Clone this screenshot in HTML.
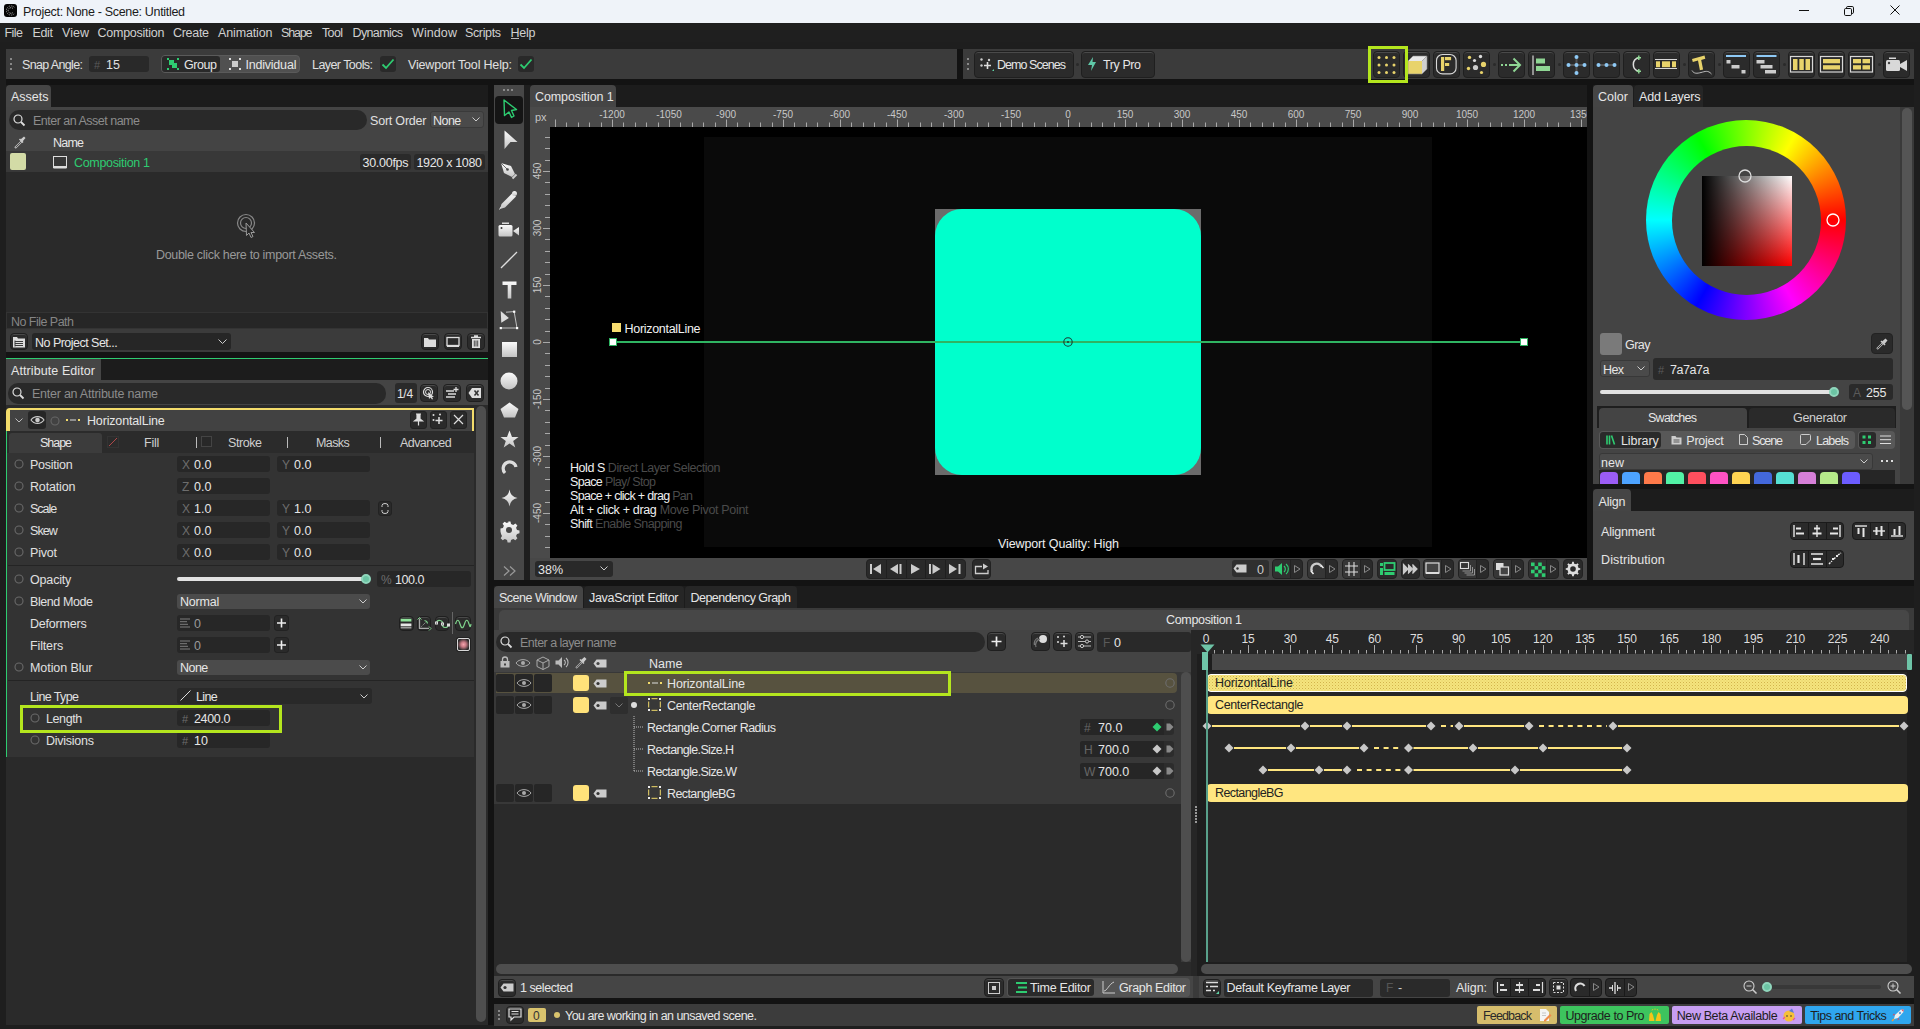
<!DOCTYPE html><html><head><meta charset='utf-8'><style>
*{box-sizing:border-box;margin:0;padding:0}
html,body{width:1920px;height:1029px;overflow:hidden;background:#1e1e1e;font-family:"Liberation Sans",sans-serif;font-size:12px;color:#dcdcdc}
div{position:absolute}
.t{white-space:nowrap}
svg{position:absolute;overflow:visible}
.btn{background:#2b2b2b;border:1px solid #1f1f1f;border-radius:4px;box-shadow:inset 0 1px 0 #4a4a4a}
.inp{background:#292929;border-radius:3px}
</style></head><body><div style="left:0px;top:0px;width:1920px;height:23px;background:#eff3f9"></div>
<div style="left:3.5px;top:4.3px;width:13px;height:13.2px;background:#050505;border-radius:3px"></div>
<svg style="left:3.5px;top:4.3px;" width="13" height="13" viewBox="0 0 13 13"><path d="M10.3 3.3A4.6 4.6 0 1 0 10.3 9.7" fill="none" stroke="#9a9a9a" stroke-width="0.9" stroke-dasharray="1.3 0.9"/><path d="M9 4.6A2.8 2.8 0 1 0 9 8.4" fill="none" stroke="#bbb" stroke-width="0.9" stroke-dasharray="1.2 0.8"/></svg>
<div class="t" style="left:23px;top:4.0px;height:16px;line-height:16px;color:#1b1b1b;font-size:12.5px;letter-spacing:-0.320px">Project: None - Scene: Untitled</div>
<div style="left:1799px;top:10px;width:10px;height:1px;background:#111"></div>
<svg style="left:1843px;top:4.5px;" width="12" height="12" viewBox="0 0 12 12"><rect x="1.5" y="3.5" width="7" height="7" rx="1.2" fill="none" stroke="#111"/><path d="M3.5 3.3V2.8a1.3 1.3 0 0 1 1.3-1.3h4.4a1.3 1.3 0 0 1 1.3 1.3v4.4a1.3 1.3 0 0 1-1.3 1.3h-0.5" fill="none" stroke="#111"/></svg>
<svg style="left:1890px;top:5px;" width="10" height="10" viewBox="0 0 10 10"><path d="M0.5 0.5L9.5 9.5M9.5 0.5L0.5 9.5" stroke="#111" stroke-width="1"/></svg>
<div style="left:0px;top:23px;width:1920px;height:19px;background:#1f1f1f"></div>
<div class="t" style="left:4.5px;top:24.5px;height:16px;line-height:16px;color:#d0d0d0;font-size:12.5px;letter-spacing:-0.550px">File</div>
<div class="t" style="left:32.5px;top:24.5px;height:16px;line-height:16px;color:#d0d0d0;font-size:12.5px;letter-spacing:-0.350px">Edit</div>
<div class="t" style="left:62px;top:24.5px;height:16px;line-height:16px;color:#d0d0d0;font-size:12.5px;letter-spacing:0.017px">View</div>
<div class="t" style="left:97.5px;top:24.5px;height:16px;line-height:16px;color:#d0d0d0;font-size:12.5px;letter-spacing:-0.250px">Composition</div>
<div class="t" style="left:173px;top:24.5px;height:16px;line-height:16px;color:#d0d0d0;font-size:12.5px;letter-spacing:-0.300px">Create</div>
<div class="t" style="left:218px;top:24.5px;height:16px;line-height:16px;color:#d0d0d0;font-size:12.5px;letter-spacing:-0.138px">Animation</div>
<div class="t" style="left:281px;top:24.5px;height:16px;line-height:16px;color:#d0d0d0;font-size:12.5px;letter-spacing:-1.162px">Shape</div>
<div class="t" style="left:322px;top:24.5px;height:16px;line-height:16px;color:#d0d0d0;font-size:12.5px;letter-spacing:-0.650px">Tool</div>
<div class="t" style="left:352.5px;top:24.5px;height:16px;line-height:16px;color:#d0d0d0;font-size:12.5px;letter-spacing:-0.621px">Dynamics</div>
<div class="t" style="left:412px;top:24.5px;height:16px;line-height:16px;color:#d0d0d0;font-size:12.5px;letter-spacing:0.090px">Window</div>
<div class="t" style="left:465px;top:24.5px;height:16px;line-height:16px;color:#d0d0d0;font-size:12.5px;letter-spacing:-0.367px">Scripts</div>
<div class="t" style="left:510.5px;top:24.5px;height:16px;line-height:16px;color:#d0d0d0;font-size:12.5px;letter-spacing:-0.233px">Help</div>
<div style="left:510.5px;top:38px;width:8.5px;height:1px;background:#bbb"></div>
<div style="left:6px;top:49px;width:951px;height:30px;background:#3b3b3b"></div>
<div style="left:957px;top:49px;width:6px;height:30px;background:#131313"></div>
<div style="left:963px;top:49px;width:951px;height:30px;background:#3b3b3b"></div>
<div style="left:6px;top:79px;width:1908px;height:6px;background:#131313"></div>
<div style="left:488px;top:85px;width:6px;height:940px;background:#131313"></div>
<div style="left:1587px;top:85px;width:6px;height:495px;background:#131313"></div>
<div style="left:494px;top:580px;width:1420px;height:6px;background:#131313"></div>
<div style="left:494px;top:998px;width:1420px;height:6px;background:#131313"></div>
<div style="left:10px;top:58px;width:2px;height:2px;background:#888"></div>
<div style="left:967px;top:58px;width:2px;height:2px;background:#888"></div>
<div style="left:10px;top:63px;width:2px;height:2px;background:#888"></div>
<div style="left:967px;top:63px;width:2px;height:2px;background:#888"></div>
<div style="left:10px;top:68px;width:2px;height:2px;background:#888"></div>
<div style="left:967px;top:68px;width:2px;height:2px;background:#888"></div>
<div class="t" style="left:22px;top:57.0px;height:16px;line-height:16px;color:#e0e0e0;font-size:12.5px;letter-spacing:-0.640px">Snap Angle:</div>
<div style="left:89px;top:56px;width:60px;height:16px;background:#292929;border-radius:3px"></div>
<div class="t" style="left:94px;top:57.0px;height:16px;line-height:16px;color:#5a5a5a;font-size:11px">#</div>
<div class="t" style="left:106px;top:57.0px;height:16px;line-height:16px;color:#e0e0e0;font-size:12.5px">15</div>
<div style="left:161px;top:55px;width:139px;height:18px;background:#505050;border-radius:4px;border:1px solid #5a5a5a"></div>
<div style="left:162px;top:56px;width:58px;height:16px;background:#292929;border-radius:3px"></div>
<svg style="left:167px;top:58px;" width="13" height="12" viewBox="0 0 13 12"><rect x="0" y="0" width="2" height="2" fill="#2ecc71"/><rect x="10" y="0" width="2" height="2" fill="#2ecc71"/><rect x="0" y="10" width="2" height="2" fill="#2ecc71"/><rect x="10" y="10" width="2" height="2" fill="#2ecc71"/><rect x="2" y="2" width="5" height="5" fill="#2ecc71"/><rect x="5" y="5" width="5" height="5" fill="#2ecc71"/></svg>
<div class="t" style="left:184px;top:57.0px;height:16px;line-height:16px;color:#e6e6e6;font-size:12.5px;letter-spacing:-0.438px">Group</div>
<svg style="left:229px;top:58px;" width="12" height="12" viewBox="0 0 12 12"><rect x="0" y="0" width="2" height="2" fill="#ddd"/><rect x="10" y="0" width="2" height="2" fill="#ddd"/><rect x="0" y="10" width="2" height="2" fill="#ddd"/><rect x="10" y="10" width="2" height="2" fill="#ddd"/><rect x="3" y="3" width="6" height="6" fill="#ccc"/></svg>
<div class="t" style="left:245.4px;top:57.0px;height:16px;line-height:16px;color:#e6e6e6;font-size:12.5px;letter-spacing:-0.200px">Individual</div>
<div class="t" style="left:312px;top:57.0px;height:16px;line-height:16px;color:#e0e0e0;font-size:12.5px;letter-spacing:-0.559px">Layer Tools:</div>
<div style="left:380px;top:56px;width:16px;height:16px;background:#292929;border-radius:3px"></div>
<svg style="left:380px;top:56px;" width="16" height="16" viewBox="0 0 16 16"><path d="M2.5 8.5L6 12L13.5 3.5" fill="none" stroke="#2ecc71" stroke-width="1.8"/></svg>
<div class="t" style="left:408px;top:57.0px;height:16px;line-height:16px;color:#e0e0e0;font-size:12.5px;letter-spacing:-0.181px">Viewport Tool Help:</div>
<div style="left:518px;top:56px;width:16px;height:16px;background:#292929;border-radius:3px"></div>
<svg style="left:518px;top:56px;" width="16" height="16" viewBox="0 0 16 16"><path d="M2.5 8.5L6 12L13.5 3.5" fill="none" stroke="#2ecc71" stroke-width="1.8"/></svg>
<div class="btn" style="left:974px;top:51px;width:100px;height:27px;"></div>
<svg style="left:980px;top:58px;" width="14" height="14" viewBox="0 0 14 14"><circle cx="1.5" cy="1.5" r="1.2" fill="#ccc"/><circle cx="9" cy="2" r="1.2" fill="#ccc"/><circle cx="1.5" cy="7.5" r="1.2" fill="#ccc"/><path d="M7.5 4v7M4 7.5h7" stroke="#ddd" stroke-width="1.6"/><path d="M12 13L14 11V13Z" fill="#5fd3a5"/></svg>
<div class="t" style="left:997px;top:57.0px;height:16px;line-height:16px;color:#e6e6e6;font-size:12.5px;letter-spacing:-0.950px">Demo Scenes</div>
<div style="left:1076px;top:63px;width:3px;height:3px;background:#2a2a2a;border-radius:50%"></div>
<div class="btn" style="left:1081px;top:51px;width:74px;height:27px;"></div>
<svg style="left:1088px;top:57px;" width="9" height="14" viewBox="0 0 9 14"><path d="M5 0L0 8H4L3 14L8 5H4.5Z" fill="#5fc9a8"/></svg>
<div class="t" style="left:1103px;top:57.0px;height:16px;line-height:16px;color:#e6e6e6;font-size:12.5px;letter-spacing:-0.417px">Try Pro</div>
<div class="btn" style="left:1373px;top:51px;width:27px;height:27px;"></div>
<div class="btn" style="left:1403px;top:51px;width:27px;height:27px;"></div>
<div class="btn" style="left:1433px;top:51px;width:27px;height:27px;"></div>
<div class="btn" style="left:1463px;top:51px;width:27px;height:27px;"></div>
<div class="btn" style="left:1498px;top:51px;width:27px;height:27px;"></div>
<div class="btn" style="left:1528px;top:51px;width:27px;height:27px;"></div>
<div class="btn" style="left:1563px;top:51px;width:27px;height:27px;"></div>
<div class="btn" style="left:1593px;top:51px;width:27px;height:27px;"></div>
<div class="btn" style="left:1623px;top:51px;width:27px;height:27px;"></div>
<div class="btn" style="left:1653px;top:51px;width:27px;height:27px;"></div>
<div class="btn" style="left:1688px;top:51px;width:27px;height:27px;"></div>
<div class="btn" style="left:1723px;top:51px;width:27px;height:27px;"></div>
<div class="btn" style="left:1753px;top:51px;width:27px;height:27px;"></div>
<div class="btn" style="left:1788px;top:51px;width:27px;height:27px;"></div>
<div class="btn" style="left:1818px;top:51px;width:27px;height:27px;"></div>
<div class="btn" style="left:1848px;top:51px;width:27px;height:27px;"></div>
<div class="btn" style="left:1883px;top:51px;width:27px;height:27px;"></div>
<div style="left:1493px;top:63px;width:3px;height:3px;background:#2a2a2a;border-radius:50%"></div>
<div style="left:1558px;top:63px;width:3px;height:3px;background:#2a2a2a;border-radius:50%"></div>
<div style="left:1683px;top:63px;width:3px;height:3px;background:#2a2a2a;border-radius:50%"></div>
<div style="left:1718px;top:63px;width:3px;height:3px;background:#2a2a2a;border-radius:50%"></div>
<div style="left:1783px;top:63px;width:3px;height:3px;background:#2a2a2a;border-radius:50%"></div>
<div style="left:1878px;top:63px;width:3px;height:3px;background:#2a2a2a;border-radius:50%"></div>
<svg style="left:1373px;top:51px;" width="27" height="27" viewBox="0 0 27 27"><circle cx="6" cy="6.5" r="1.5" fill="#e8d36b"/><circle cx="6" cy="14" r="1.5" fill="#e8d36b"/><circle cx="6" cy="21.5" r="1.5" fill="#e8d36b"/><circle cx="13.5" cy="6.5" r="1.5" fill="#e8d36b"/><circle cx="13.5" cy="14" r="1.5" fill="#e8d36b"/><circle cx="13.5" cy="21.5" r="1.5" fill="#e8d36b"/><circle cx="21" cy="6.5" r="1.5" fill="#e8d36b"/><circle cx="21" cy="14" r="1.5" fill="#e8d36b"/><circle cx="21" cy="21.5" r="1.5" fill="#e8d36b"/></svg>
<svg style="left:1403px;top:51px;" width="27" height="27" viewBox="0 0 27 27"><path d="M5 10L10 5H24L19 10Z" fill="#e8e8e8"/><path d="M19 10L24 5V18L19 23Z" fill="#cfcfcf"/><rect x="5" y="10" width="14" height="13" fill="#e8d36b"/><path d="M5 10L10 5H24V18L19 23H5Z" fill="none" stroke="#888" stroke-width="0.6"/></svg>
<svg style="left:1433px;top:51px;" width="27" height="27" viewBox="0 0 27 27"><rect x="3.5" y="3.5" width="19.6" height="19.4" rx="6" fill="none" stroke="#d8d8d8" stroke-width="1.1"/><rect x="8" y="6" width="3.2" height="14" fill="#e8d36b"/><rect x="12" y="6" width="6.1" height="3.2" fill="#e8d36b"/><rect x="12" y="12" width="4.2" height="3" fill="#e8d36b"/></svg>
<svg style="left:1463px;top:51px;" width="27" height="27" viewBox="0 0 27 27"><circle cx="6.5" cy="6.4" r="1.7" fill="#e8d36b"/><circle cx="17.5" cy="5.5" r="1.7" fill="#ddd"/><circle cx="11.5" cy="9.5" r="1.6" fill="#ddd"/><circle cx="20.5" cy="13.4" r="2.6" fill="#e8d36b"/><circle cx="12.5" cy="16.5" r="2.6" fill="#ccc"/><circle cx="5.5" cy="17.5" r="1.7" fill="#e8d36b"/><circle cx="18.5" cy="21.5" r="1.6" fill="#e8d36b"/></svg>
<svg style="left:1498px;top:51px;" width="27" height="27" viewBox="0 0 27 27"><path d="M3 14h2M7 14h2M11 14h11" stroke="#8fd694" stroke-width="2"/><path d="M15.5 7.5L22 14L15.5 20.5" fill="none" stroke="#8fd694" stroke-width="2"/></svg>
<svg style="left:1528px;top:51px;" width="27" height="27" viewBox="0 0 27 27"><path d="M5 4.5V24" stroke="#d8d8d8" stroke-width="1.2"/><rect x="8" y="7.5" width="9" height="5" fill="#8fd694"/><rect x="8" y="15" width="14" height="5" fill="#8fd694"/></svg>
<svg style="left:1563px;top:51px;" width="27" height="27" viewBox="0 0 27 27"><path d="M13.5 5V23M5 14H22" stroke="#555" stroke-width="2"/><circle cx="13.5" cy="6" r="2" fill="#8ec9f5"/><circle cx="5.5" cy="14" r="2" fill="#8ec9f5"/><circle cx="13.5" cy="14" r="2" fill="#8ec9f5"/><circle cx="21.5" cy="14" r="2" fill="#8ec9f5"/><circle cx="13.5" cy="22" r="2" fill="#8ec9f5"/></svg>
<svg style="left:1593px;top:51px;" width="27" height="27" viewBox="0 0 27 27"><path d="M5 14H22" stroke="#555" stroke-width="2"/><circle cx="5.5" cy="14" r="2" fill="#8ec9f5"/><circle cx="13.5" cy="14" r="2" fill="#8ec9f5"/><circle cx="21.5" cy="14" r="2" fill="#8ec9f5"/></svg>
<svg style="left:1623px;top:51px;" width="27" height="27" viewBox="0 0 27 27"><path d="M15.8 6.7A6.9 6.9 0 0 0 15.8 20.2" fill="none" stroke="#ddd" stroke-width="1.5"/><path d="M15.8 4.5V9M13.6 6.7H18" stroke="#8fd694" stroke-width="1.5"/><path d="M15.8 18V22.4M13.6 20.2H18" stroke="#8fd694" stroke-width="1.5"/></svg>
<svg style="left:1653px;top:51px;" width="27" height="27" viewBox="0 0 27 27"><path d="M2 8.5H24M2 17.5H24" stroke="#d8d8d8" stroke-width="1.1"/><rect x="3" y="10.3" width="4" height="5.9" fill="#e8d36b"/><rect x="9" y="10.3" width="8" height="5.9" fill="#e8d36b"/><rect x="19" y="10.3" width="4" height="5.9" fill="#e8d36b"/></svg>
<svg style="left:1688px;top:51px;" width="27" height="27" viewBox="0 0 27 27"><path d="M4 8L16.5 4.5L17.3 7.8L13.2 8.9L15.1 18.5L11.9 19.2L10 9.6L4.8 11Z" fill="#e8d36b"/><path d="M4 19.5C6 23 9 22.5 13 21.5S20 19 23.5 23" fill="none" stroke="#ccc" stroke-width="0.9"/></svg>
<svg style="left:1723px;top:51px;" width="27" height="27" viewBox="0 0 27 27"><path d="M3 5H23" stroke="#8ec9f5" stroke-width="2"/><rect x="3.5" y="9" width="4" height="3.5" fill="#ccc"/><rect x="8.5" y="14" width="8" height="3.5" fill="#ccc"/><rect x="18.5" y="19" width="4" height="3.5" fill="#ccc"/></svg>
<svg style="left:1753px;top:51px;" width="27" height="27" viewBox="0 0 27 27"><path d="M3.5 5H23.5" stroke="#8ec9f5" stroke-width="2"/><rect x="3.5" y="9" width="8" height="3.5" fill="#ccc"/><rect x="7.5" y="14" width="12" height="3.5" fill="#ccc"/><rect x="12" y="19" width="11" height="3.5" fill="#ccc"/></svg>
<svg style="left:1788px;top:51px;" width="27" height="27" viewBox="0 0 27 27"><rect x="2.5" y="5.5" width="22" height="15.5" fill="none" stroke="#d8d8d8" stroke-width="1.2"/><rect x="5" y="8" width="4.5" height="11" fill="#e8d36b"/><rect x="11.3" y="8" width="4.5" height="11" fill="#e8d36b"/><rect x="17.5" y="8" width="4.5" height="11" fill="#e8d36b"/></svg>
<svg style="left:1818px;top:51px;" width="27" height="27" viewBox="0 0 27 27"><rect x="2.5" y="5.5" width="22" height="15.5" fill="none" stroke="#d8d8d8" stroke-width="1.2"/><rect x="5" y="8" width="17" height="4.3" fill="#e8d36b"/><rect x="5" y="14.2" width="17" height="4.3" fill="#e8d36b"/></svg>
<svg style="left:1848px;top:51px;" width="27" height="27" viewBox="0 0 27 27"><rect x="2.5" y="5.5" width="22" height="15.5" fill="none" stroke="#d8d8d8" stroke-width="1.2"/><rect x="5" y="8" width="8" height="4.3" fill="#e8d36b"/><rect x="14.5" y="8" width="7.5" height="4.3" fill="#e8d36b"/><rect x="5" y="14.2" width="8" height="4.3" fill="#e8d36b"/><rect x="14.5" y="14.2" width="7.5" height="4.3" fill="#e8d36b"/></svg>
<svg style="left:1883px;top:51px;" width="27" height="27" viewBox="0 0 27 27"><rect x="3" y="9" width="14" height="11" rx="1.5" fill="#d8d8d8"/><rect x="6" y="6.5" width="7" height="1.5" fill="#d8d8d8"/><circle cx="6" cy="12" r="1.2" fill="#444"/><path d="M17 13L24 9V20L17 16Z" fill="#d8d8d8"/></svg>
<div style="left:1368px;top:46px;width:40px;height:37px;border:3px solid #b4e61e"></div>
<div style="left:6px;top:85px;width:482px;height:22px;background:#1c1c1c"></div>
<div style="left:6px;top:85px;width:45px;height:22px;background:#454545;border-radius:4px 4px 0 0"></div>
<div class="t" style="left:11px;top:89.0px;height:16px;line-height:16px;color:#e6e6e6;font-size:12.5px">Assets</div>
<div style="left:6px;top:107px;width:482px;height:44px;background:#444444"></div>
<div style="left:9px;top:110px;width:358px;height:20px;background:#292929;border-radius:10px"></div>
<svg style="left:13px;top:114px;" width="13" height="13" viewBox="0 0 13 13"><circle cx="5" cy="5" r="4" fill="none" stroke="#ddd" stroke-width="1.2"/><path d="M8 8L11.5 11.5" stroke="#ddd" stroke-width="1.8"/></svg>
<div class="t" style="left:33px;top:113.0px;height:16px;line-height:16px;color:#8c8c8c;font-size:12.5px;letter-spacing:-0.503px">Enter an Asset name</div>
<div class="t" style="left:370px;top:113.0px;height:16px;line-height:16px;color:#e0e0e0;font-size:12.5px;letter-spacing:-0.206px">Sort Order</div>
<div style="left:430px;top:111px;width:54px;height:17px;background:#4a4a4a;border:1px solid #3a3a3a;border-radius:3px"></div>
<div class="t" style="left:433px;top:113.0px;height:16px;line-height:16px;color:#e6e6e6;font-size:12.5px;letter-spacing:-0.533px">None</div>
<svg style="left:472px;top:117px;" width="8" height="5" viewBox="0 0 8 5"><path d="M0.5 0.5L4 4L7.5 0.5" fill="none" stroke="#ccc"/></svg>
<svg style="left:13px;top:135px;" width="13" height="14" viewBox="0 0 13 14"><path d="M2 13L9 6" stroke="#bbb" stroke-width="2.2"/><path d="M2.8 12.2L8.5 6.5" stroke="#444" stroke-width="0.9"/><path d="M7.5 4.5L11 1.5L12.5 3L9.5 6.5Z" fill="#ccc"/><path d="M6.5 4L10 7.5" stroke="#ccc" stroke-width="1.6"/></svg>
<div class="t" style="left:53px;top:135.0px;height:16px;line-height:16px;color:#e6e6e6;font-size:12.5px;letter-spacing:-0.783px">Name</div>
<div style="left:6px;top:151px;width:482px;height:21px;background:#383838"></div>
<div style="left:10px;top:153px;width:16px;height:17px;background:#d3dba6;border-radius:2px"></div>
<svg style="left:53px;top:156px;" width="14" height="13" viewBox="0 0 14 13"><rect x="0.5" y="0.5" width="13" height="11" fill="none" stroke="#ddd"/><rect x="0.5" y="10" width="13" height="2.5" fill="#ddd"/></svg>
<div class="t" style="left:74px;top:155.0px;height:16px;line-height:16px;color:#2ecc71;font-size:12.5px;letter-spacing:-0.325px">Composition 1</div>
<div style="left:360px;top:154px;width:51px;height:16px;background:#2a2a2a;border-radius:3px"></div>
<div class="t" style="left:362.5px;top:155.0px;height:16px;line-height:16px;color:#e6e6e6;font-size:12.5px;letter-spacing:-0.279px">30.00fps</div>
<div style="left:414px;top:154px;width:71px;height:16px;background:#2a2a2a;border-radius:3px"></div>
<div class="t" style="left:416.5px;top:155.0px;height:16px;line-height:16px;color:#e6e6e6;font-size:12.5px;letter-spacing:-0.330px">1920 x 1080</div>
<div style="left:6px;top:172px;width:482px;height:140px;background:#2a2a2a"></div>
<svg style="left:236px;top:211px;" width="22" height="28" viewBox="0 0 22 28"><circle cx="10" cy="12" r="8.5" fill="none" stroke="#888" stroke-width="1.2"/><circle cx="10" cy="12" r="5.5" fill="none" stroke="#888" stroke-width="1.2"/><path d="M10 12L10.5 24.5L13 22L15 26.5L17 25.5L15 21.5L18.5 21.5Z" fill="#2a2a2a" stroke="#999" stroke-width="1"/></svg>
<div class="t" style="left:156px;top:247.0px;height:16px;line-height:16px;color:#999;font-size:12.5px;letter-spacing:-0.316px">Double click here to import Assets.</div>
<div style="left:6px;top:312px;width:482px;height:17px;background:#262626;border:1px solid #333"></div>
<div class="t" style="left:11px;top:314.0px;height:16px;line-height:16px;color:#858585;font-size:12.5px;letter-spacing:-0.527px">No File Path</div>
<div style="left:6px;top:329px;width:482px;height:23px;background:#3b3b3b"></div>
<div class="btn" style="left:10px;top:333px;width:18px;height:17px;"></div>
<svg style="left:12px;top:335px;" width="14" height="13" viewBox="0 0 14 13"><path d="M1 2h4l1 1.5h7v9H1Z" fill="#ddd"/><path d="M3 6.5h8M3 8.5h8M3 10.5h8" stroke="#3b3b3b" stroke-width="1"/><path d="M3 5.5V11.5" stroke="#3b3b3b"/></svg>
<div style="left:32px;top:333px;width:199px;height:17px;background:#262626;border-radius:3px"></div>
<div class="t" style="left:35px;top:334.5px;height:16px;line-height:16px;color:#e6e6e6;font-size:12.5px;letter-spacing:-0.519px">No Project Set...</div>
<svg style="left:218px;top:339px;" width="9" height="5" viewBox="0 0 9 5"><path d="M0.5 0.5L4.5 4.5L8.5 0.5" fill="none" stroke="#ccc"/></svg>
<div class="btn" style="left:421px;top:333px;width:18px;height:17px;"></div>
<div class="btn" style="left:444px;top:333px;width:18px;height:17px;"></div>
<div class="btn" style="left:467px;top:333px;width:18px;height:17px;"></div>
<svg style="left:423px;top:336px;" width="14" height="12" viewBox="0 0 14 12"><path d="M1 2h4l1 1.5h7v7.5H1Z" fill="#ddd"/></svg>
<svg style="left:446px;top:336px;" width="14" height="12" viewBox="0 0 14 12"><rect x="1" y="1.5" width="12" height="8" fill="none" stroke="#ddd" stroke-width="1.3"/><rect x="1" y="9" width="12" height="2" fill="#ddd"/></svg>
<svg style="left:469px;top:335px;" width="14" height="14" viewBox="0 0 14 14"><path d="M2 2.5h10M5 1h4" stroke="#ddd" stroke-width="1.3"/><path d="M3 4h8v9H3Z" fill="#ddd"/><path d="M5.3 5.5v6M7 5.5v6M8.7 5.5v6" stroke="#3b3b3b" stroke-width="0.9"/></svg>
<div style="left:6px;top:352px;width:482px;height:6px;background:#141414"></div>
<div style="left:6px;top:358px;width:482px;height:1px;background:#2ecc71"></div>
<div style="left:6px;top:359px;width:482px;height:21px;background:#1c1c1c"></div>
<div style="left:6px;top:359px;width:95px;height:21px;background:#454545"></div>
<div class="t" style="left:11px;top:362.5px;height:16px;line-height:16px;color:#e6e6e6;font-size:12.5px;letter-spacing:0.087px">Attribute Editor</div>
<div style="left:6px;top:380px;width:482px;height:25px;background:#444444"></div>
<div style="left:8px;top:383px;width:378px;height:21px;background:#292929;border-radius:10px"></div>
<svg style="left:12px;top:387px;" width="13" height="13" viewBox="0 0 13 13"><circle cx="5" cy="5" r="4" fill="none" stroke="#ddd" stroke-width="1.2"/><path d="M8 8L11.5 11.5" stroke="#ddd" stroke-width="1.8"/></svg>
<div class="t" style="left:32px;top:386.0px;height:16px;line-height:16px;color:#8c8c8c;font-size:12.5px;letter-spacing:-0.241px">Enter an Attribute name</div>
<div style="left:395px;top:383px;width:22px;height:20px;background:#2a2a2a;border-radius:3px"></div>
<div class="t" style="left:397px;top:386.0px;height:16px;line-height:16px;color:#e6e6e6;font-size:12px;letter-spacing:-0.3px">1/4</div>
<div class="btn" style="left:420px;top:384px;width:18px;height:18px;"></div>
<div class="btn" style="left:443px;top:384px;width:18px;height:18px;"></div>
<div class="btn" style="left:466px;top:384px;width:18px;height:18px;"></div>
<svg style="left:422px;top:386px;" width="14" height="14" viewBox="0 0 14 14"><circle cx="6" cy="6" r="4.5" fill="none" stroke="#ddd" stroke-width="1.2"/><circle cx="6" cy="6" r="2.5" fill="none" stroke="#ddd"/><path d="M6 6L7 13L8.5 11.5L10 13.5L11 13L10 11L12 11Z" fill="#ddd"/></svg>
<svg style="left:445px;top:386px;" width="14" height="14" viewBox="0 0 14 14"><path d="M1 5h8M3 8h8M1 11h9" stroke="#ddd" stroke-width="1.5"/><path d="M11 1v5M8.5 3.5h5" stroke="#ddd" stroke-width="1.3"/></svg>
<svg style="left:468px;top:387px;" width="14" height="12" viewBox="0 0 14 12"><path d="M4 1H13V11H4L0.5 6Z" fill="#ddd"/><path d="M6.5 3.5L10.5 8.5M10.5 3.5L6.5 8.5" stroke="#333" stroke-width="1.5"/></svg>
<div style="left:6px;top:405px;width:482px;height:620px;background:#2a2a2a"></div>
<div style="left:476px;top:406px;width:10px;height:616px;background:#4e4e4e;border-radius:5px"></div>
<div style="left:6px;top:408px;width:468px;height:23px;background:#424242;border-top:2px solid #f3dc6b;border-right:2px solid #f3dc6b;border-left:4px solid #f3dc6b;border-radius:4px 0 0 0"></div>
<svg style="left:15px;top:418px;" width="8" height="5" viewBox="0 0 8 5"><path d="M0.5 0.5L4 4L7.5 0.5" fill="none" stroke="#bbb"/></svg>
<div style="left:28px;top:411px;width:18px;height:18px;background:#262626;border-radius:3px"></div>
<svg style="left:30px;top:415px;" width="15" height="10" viewBox="0 0 15 10"><path d="M1 5C4 0.5 11 0.5 14 5C11 9.5 4 9.5 1 5Z" fill="none" stroke="#ccc" stroke-width="1.1"/><circle cx="7.5" cy="5" r="2.3" fill="#ccc"/></svg>
<svg style="left:50px;top:416px;" width="10" height="10" viewBox="0 0 10 10"><circle cx="5" cy="5" r="4" fill="none" stroke="#666" stroke-width="1.1"/></svg>
<svg style="left:66px;top:418px;" width="15" height="4" viewBox="0 0 15 4"><rect x="0" y="1" width="2" height="2" fill="#f3dc6b"/><rect x="4" y="1.5" width="6" height="1" fill="#ddd"/><rect x="12" y="1" width="2" height="2" fill="#f3dc6b"/></svg>
<div class="t" style="left:87px;top:413.0px;height:16px;line-height:16px;color:#e6e6e6;font-size:12.5px;letter-spacing:-0.162px">HorizontalLine</div>
<div style="left:410px;top:411px;width:17px;height:18px;background:#2a2a2a;border-radius:3px;border:1px solid #222"></div>
<div style="left:430px;top:411px;width:17px;height:18px;background:#2a2a2a;border-radius:3px;border:1px solid #222"></div>
<div style="left:450px;top:411px;width:17px;height:18px;background:#2a2a2a;border-radius:3px;border:1px solid #222"></div>
<svg style="left:413px;top:413px;" width="11" height="13" viewBox="0 0 11 13"><path d="M3 1h5M4 1v5L1.5 8h8L7 6V1M5.5 8v4.5" fill="#ddd" stroke="#ddd" stroke-width="1.2"/></svg>
<svg style="left:432px;top:413px;" width="13" height="13" viewBox="0 0 13 13"><circle cx="1.5" cy="2" r="1" fill="#ddd"/><circle cx="8" cy="1.5" r="1" fill="#ddd"/><circle cx="1.5" cy="7" r="1" fill="#ddd"/><path d="M7 4v7M3.5 7.5h7" stroke="#ddd" stroke-width="1.5"/></svg>
<svg style="left:453px;top:414px;" width="11" height="11" viewBox="0 0 11 11"><path d="M1 1L10 10M10 1L1 10" stroke="#ddd" stroke-width="1.2"/></svg>
<div style="left:6px;top:431px;width:468px;height:22px;background:#2b2b2b"></div>
<div style="left:9px;top:433px;width:93px;height:20px;background:#3c3c3c;border-radius:3px 3px 0 0"></div>
<div class="t" style="left:40px;top:435.0px;height:16px;line-height:16px;color:#e6e6e6;font-size:12.5px;letter-spacing:-1.037px">Shape</div>
<svg style="left:107px;top:436px;" width="12" height="12" viewBox="0 0 12 12"><rect x="0.5" y="0.5" width="11" height="11" fill="none" stroke="#333"/><path d="M2 10L10 2" stroke="#b04848" stroke-width="1"/></svg>
<div class="t" style="left:144px;top:435.0px;height:16px;line-height:16px;color:#cfcfcf;font-size:12.5px;letter-spacing:-0.217px">Fill</div>
<div style="left:196px;top:437px;width:1px;height:11px;background:#bbb"></div>
<div style="left:201px;top:436px;width:11px;height:11px;border:1px solid #444;background:#282828"></div>
<div class="t" style="left:228px;top:435.0px;height:16px;line-height:16px;color:#cfcfcf;font-size:12.5px;letter-spacing:-0.430px">Stroke</div>
<div style="left:287px;top:437px;width:1px;height:11px;background:#bbb"></div>
<div class="t" style="left:316px;top:435.0px;height:16px;line-height:16px;color:#cfcfcf;font-size:12.5px;letter-spacing:-0.600px">Masks</div>
<div style="left:380px;top:437px;width:1px;height:11px;background:#bbb"></div>
<div class="t" style="left:400px;top:435.0px;height:16px;line-height:16px;color:#cfcfcf;font-size:12.5px;letter-spacing:-0.571px">Advanced</div>
<div style="left:6px;top:453px;width:468px;height:304px;background:#333333"></div>
<div style="left:6px;top:431px;width:1px;height:326px;background:#2ecc71"></div>
<div style="left:8px;top:565px;width:466px;height:1px;background:#242424"></div>
<div style="left:8px;top:680px;width:466px;height:1px;background:#242424"></div>
<svg style="left:14px;top:459px;" width="10" height="10" viewBox="0 0 10 10"><circle cx="5" cy="5" r="4" fill="none" stroke="#6a6a6a" stroke-width="1.1"/></svg>
<div class="t" style="left:30px;top:457.0px;height:16px;line-height:16px;color:#e0e0e0;font-size:12.5px;letter-spacing:-0.264px">Position</div>
<div style="left:177px;top:456px;width:93px;height:16px;background:#272727;border-radius:3px"></div>
<div class="t" style="left:182px;top:457.0px;height:16px;line-height:16px;color:#6d6d6d;font-size:12px">X</div>
<div class="t" style="left:194px;top:457.0px;height:16px;line-height:16px;color:#e6e6e6;font-size:12.5px">0.0</div>
<div style="left:277px;top:456px;width:93px;height:16px;background:#272727;border-radius:3px"></div>
<div class="t" style="left:282px;top:457.0px;height:16px;line-height:16px;color:#6d6d6d;font-size:12px">Y</div>
<div class="t" style="left:294px;top:457.0px;height:16px;line-height:16px;color:#e6e6e6;font-size:12.5px">0.0</div>
<svg style="left:14px;top:481px;" width="10" height="10" viewBox="0 0 10 10"><circle cx="5" cy="5" r="4" fill="none" stroke="#6a6a6a" stroke-width="1.1"/></svg>
<div class="t" style="left:30px;top:479.0px;height:16px;line-height:16px;color:#e0e0e0;font-size:12.5px;letter-spacing:-0.164px">Rotation</div>
<div style="left:177px;top:478px;width:93px;height:16px;background:#272727;border-radius:3px"></div>
<div class="t" style="left:182px;top:479.0px;height:16px;line-height:16px;color:#6d6d6d;font-size:12px">Z</div>
<div class="t" style="left:194px;top:479.0px;height:16px;line-height:16px;color:#e6e6e6;font-size:12.5px">0.0</div>
<svg style="left:14px;top:503px;" width="10" height="10" viewBox="0 0 10 10"><circle cx="5" cy="5" r="4" fill="none" stroke="#6a6a6a" stroke-width="1.1"/></svg>
<div class="t" style="left:30px;top:501.0px;height:16px;line-height:16px;color:#e0e0e0;font-size:12.5px;letter-spacing:-0.987px">Scale</div>
<div style="left:177px;top:500px;width:93px;height:16px;background:#272727;border-radius:3px"></div>
<div class="t" style="left:182px;top:501.0px;height:16px;line-height:16px;color:#6d6d6d;font-size:12px">X</div>
<div class="t" style="left:194px;top:501.0px;height:16px;line-height:16px;color:#e6e6e6;font-size:12.5px">1.0</div>
<div style="left:277px;top:500px;width:93px;height:16px;background:#272727;border-radius:3px"></div>
<div class="t" style="left:282px;top:501.0px;height:16px;line-height:16px;color:#6d6d6d;font-size:12px">Y</div>
<div class="t" style="left:294px;top:501.0px;height:16px;line-height:16px;color:#e6e6e6;font-size:12.5px">1.0</div>
<svg style="left:14px;top:525px;" width="10" height="10" viewBox="0 0 10 10"><circle cx="5" cy="5" r="4" fill="none" stroke="#6a6a6a" stroke-width="1.1"/></svg>
<div class="t" style="left:30px;top:523.0px;height:16px;line-height:16px;color:#e0e0e0;font-size:12.5px;letter-spacing:-0.950px">Skew</div>
<div style="left:177px;top:522px;width:93px;height:16px;background:#272727;border-radius:3px"></div>
<div class="t" style="left:182px;top:523.0px;height:16px;line-height:16px;color:#6d6d6d;font-size:12px">X</div>
<div class="t" style="left:194px;top:523.0px;height:16px;line-height:16px;color:#e6e6e6;font-size:12.5px">0.0</div>
<div style="left:277px;top:522px;width:93px;height:16px;background:#272727;border-radius:3px"></div>
<div class="t" style="left:282px;top:523.0px;height:16px;line-height:16px;color:#6d6d6d;font-size:12px">Y</div>
<div class="t" style="left:294px;top:523.0px;height:16px;line-height:16px;color:#e6e6e6;font-size:12.5px">0.0</div>
<svg style="left:14px;top:547px;" width="10" height="10" viewBox="0 0 10 10"><circle cx="5" cy="5" r="4" fill="none" stroke="#6a6a6a" stroke-width="1.1"/></svg>
<div class="t" style="left:30px;top:545.0px;height:16px;line-height:16px;color:#e0e0e0;font-size:12.5px;letter-spacing:-0.200px">Pivot</div>
<div style="left:177px;top:544px;width:93px;height:16px;background:#272727;border-radius:3px"></div>
<div class="t" style="left:182px;top:545.0px;height:16px;line-height:16px;color:#6d6d6d;font-size:12px">X</div>
<div class="t" style="left:194px;top:545.0px;height:16px;line-height:16px;color:#e6e6e6;font-size:12.5px">0.0</div>
<div style="left:277px;top:544px;width:93px;height:16px;background:#272727;border-radius:3px"></div>
<div class="t" style="left:282px;top:545.0px;height:16px;line-height:16px;color:#6d6d6d;font-size:12px">Y</div>
<div class="t" style="left:294px;top:545.0px;height:16px;line-height:16px;color:#e6e6e6;font-size:12.5px">0.0</div>
<div style="left:378px;top:501px;width:14px;height:15px;background:#2a2a2a;border:1px solid #222;border-radius:3px"></div>
<svg style="left:381px;top:503px;" width="8" height="11" viewBox="0 0 8 11"><path d="M1 4V2.5a3 2 0 0 1 6 0V4M1 7v1.5a3 2 0 0 0 6 0V7" fill="none" stroke="#ccc" stroke-width="1"/></svg>
<svg style="left:14px;top:574px;" width="10" height="10" viewBox="0 0 10 10"><circle cx="5" cy="5" r="4" fill="none" stroke="#6a6a6a" stroke-width="1.1"/></svg>
<div class="t" style="left:30px;top:572.0px;height:16px;line-height:16px;color:#e0e0e0;font-size:12.5px;letter-spacing:-0.167px">Opacity</div>
<div style="left:177px;top:577px;width:190px;height:4px;background:#e2e2e2;border-radius:2px"></div>
<div style="left:361px;top:574px;width:10px;height:10px;background:#6cc4a4;border-radius:50%;border:2px solid #8fd6bc"></div>
<div style="left:377px;top:571px;width:94px;height:16px;background:#272727;border-radius:3px"></div>
<div class="t" style="left:381px;top:572.0px;height:16px;line-height:16px;color:#6d6d6d;font-size:12px">%</div>
<div class="t" style="left:395px;top:572.0px;height:16px;line-height:16px;color:#e6e6e6;font-size:12.5px;letter-spacing:-0.475px">100.0</div>
<svg style="left:14px;top:596px;" width="10" height="10" viewBox="0 0 10 10"><circle cx="5" cy="5" r="4" fill="none" stroke="#6a6a6a" stroke-width="1.1"/></svg>
<div class="t" style="left:30px;top:594.0px;height:16px;line-height:16px;color:#e0e0e0;font-size:12.5px;letter-spacing:-0.411px">Blend Mode</div>
<div style="left:177px;top:594px;width:193px;height:15px;background:#4b4b4b;border-radius:3px"></div>
<div class="t" style="left:180px;top:594.0px;height:16px;line-height:16px;color:#e6e6e6;font-size:12.5px;letter-spacing:-0.200px">Normal</div>
<svg style="left:359px;top:599px;" width="8" height="5" viewBox="0 0 8 5"><path d="M0.5 0.5L4 4L7.5 0.5" fill="none" stroke="#ccc"/></svg>
<div class="t" style="left:30px;top:616.0px;height:16px;line-height:16px;color:#e0e0e0;font-size:12.5px;letter-spacing:-0.206px">Deformers</div>
<div style="left:177px;top:615px;width:93px;height:16px;background:#272727;border-radius:3px"></div>
<svg style="left:180px;top:618px;" width="11" height="10" viewBox="0 0 11 10"><path d="M0 1h10M0 3.7h7M0 6.3h8M0 9h10" stroke="#888" stroke-width="0.9"/></svg>
<div class="t" style="left:194px;top:616.0px;height:16px;line-height:16px;color:#9a9a9a;font-size:12.5px">0</div>
<div style="left:274px;top:615px;width:15px;height:16px;background:#2a2a2a;border:1px solid #222;border-radius:3px"></div>
<svg style="left:276px;top:618px;" width="11" height="10" viewBox="0 0 11 10"><path d="M5.5 0.5v9M1 5h9" stroke="#eee" stroke-width="1.6"/></svg>
<div class="t" style="left:30px;top:638.0px;height:16px;line-height:16px;color:#e0e0e0;font-size:12.5px;letter-spacing:-0.142px">Filters</div>
<div style="left:177px;top:637px;width:93px;height:16px;background:#272727;border-radius:3px"></div>
<svg style="left:180px;top:640px;" width="11" height="10" viewBox="0 0 11 10"><path d="M0 1h10M0 3.7h7M0 6.3h8M0 9h10" stroke="#888" stroke-width="0.9"/></svg>
<div class="t" style="left:194px;top:638.0px;height:16px;line-height:16px;color:#9a9a9a;font-size:12.5px">0</div>
<div style="left:274px;top:637px;width:15px;height:16px;background:#2a2a2a;border:1px solid #222;border-radius:3px"></div>
<svg style="left:276px;top:640px;" width="11" height="10" viewBox="0 0 11 10"><path d="M5.5 0.5v9M1 5h9" stroke="#eee" stroke-width="1.6"/></svg>
<div class="btn" style="left:399px;top:615.5px;width:14.5px;height:15px;"></div>
<div class="btn" style="left:416.5px;top:615.5px;width:14.5px;height:15px;"></div>
<div class="btn" style="left:434.5px;top:615.5px;width:14.5px;height:15px;"></div>
<div class="btn" style="left:455px;top:615.5px;width:15.5px;height:15px;"></div>
<svg style="left:399px;top:615.5px;" width="15" height="15" viewBox="0 0 15 15"><rect x="1.7" y="2.8" width="10.7" height="2.7" fill="#8fe39a"/><rect x="1.7" y="7.5" width="10.7" height="2.5" fill="#e6e6e6"/><rect x="1.7" y="10.5" width="10.7" height="2" fill="#999"/></svg>
<svg style="left:416.5px;top:615.5px;" width="15" height="15" viewBox="0 0 15 15"><path d="M2.5 2.5V12.3H12" fill="none" stroke="#aaa" stroke-width="1.3"/><path d="M4.5 10.5L9.5 5.5" stroke="#ccc" stroke-width="0.8" stroke-dasharray="1 1"/><path d="M7.5 4.5A3.5 3.5 0 0 1 10.5 7.5" fill="none" stroke="#7fd48c" stroke-width="1.2"/><path d="M0.5 3.5L2.5 1.5L4.5 3.5" fill="none" stroke="#7fd48c" stroke-width="1"/><path d="M12 10.5L14 12.5L12 14.5" fill="none" stroke="#7fd48c" stroke-width="1"/></svg>
<svg style="left:434.5px;top:615.5px;" width="15" height="15" viewBox="0 0 15 15"><path d="M1.5 7A3 3 0 0 1 7.5 8A3 3 0 0 0 13.5 9" fill="none" stroke="#7fd48c" stroke-width="1.1"/><rect x="0" y="5.5" width="3" height="3" fill="#ddd"/><rect x="6" y="6.5" width="3" height="3" fill="#ddd"/><rect x="12" y="7.5" width="3" height="3" fill="#ddd"/><circle cx="1.5" cy="7" r="0.6" fill="#333"/><circle cx="7.5" cy="8" r="0.6" fill="#333"/></svg>
<div style="left:452px;top:612px;width:1px;height:22px;background:#666"></div>
<svg style="left:455px;top:615.5px;" width="16" height="15" viewBox="0 0 16 15"><path d="M0.5 8C2 3 3.5 3 5 8S8 13 9.5 8S12.5 3 14 8S15.5 10 16 8" fill="none" stroke="#7fd48c" stroke-width="1.2"/></svg>
<div style="left:456.5px;top:638px;width:13px;height:13.2px;background:radial-gradient(circle,#f2a5ae 0,#c87a84 2.5px,#2a2a2a 6px);border:1.5px solid #d8d8d8;border-radius:2px;box-shadow:0 0 0 1px #222"></div>
<svg style="left:14px;top:662px;" width="10" height="10" viewBox="0 0 10 10"><circle cx="5" cy="5" r="4" fill="none" stroke="#6a6a6a" stroke-width="1.1"/></svg>
<div class="t" style="left:30px;top:660.0px;height:16px;line-height:16px;color:#e0e0e0;font-size:12.5px;letter-spacing:-0.070px">Motion Blur</div>
<div style="left:177px;top:660px;width:193px;height:15px;background:#4b4b4b;border-radius:3px"></div>
<div class="t" style="left:180px;top:660.0px;height:16px;line-height:16px;color:#e6e6e6;font-size:12.5px;letter-spacing:-0.533px">None</div>
<svg style="left:359px;top:665px;" width="8" height="5" viewBox="0 0 8 5"><path d="M0.5 0.5L4 4L7.5 0.5" fill="none" stroke="#ccc"/></svg>
<div class="t" style="left:30px;top:689.0px;height:16px;line-height:16px;color:#e0e0e0;font-size:12.5px;letter-spacing:-0.625px">Line Type</div>
<div style="left:177px;top:688px;width:195px;height:16px;background:#292929;border-radius:3px"></div>
<svg style="left:180px;top:690px;" width="11" height="11" viewBox="0 0 11 11"><path d="M0.5 10.5L10.5 0.5" stroke="#ddd" stroke-width="1"/></svg>
<div class="t" style="left:196px;top:689.0px;height:16px;line-height:16px;color:#e6e6e6;font-size:12.5px;letter-spacing:-0.650px">Line</div>
<svg style="left:360px;top:694px;" width="8" height="5" viewBox="0 0 8 5"><path d="M0.5 0.5L4 4L7.5 0.5" fill="none" stroke="#ccc"/></svg>
<svg style="left:30px;top:713px;" width="10" height="10" viewBox="0 0 10 10"><circle cx="5" cy="5" r="4" fill="none" stroke="#6a6a6a" stroke-width="1.1"/></svg>
<div class="t" style="left:46px;top:711.0px;height:16px;line-height:16px;color:#e0e0e0;font-size:12.5px;letter-spacing:-0.390px">Length</div>
<div style="left:177px;top:710px;width:93px;height:16px;background:#272727;border-radius:3px"></div>
<div class="t" style="left:182px;top:711.0px;height:16px;line-height:16px;color:#6d6d6d;font-size:11px">#</div>
<div class="t" style="left:194px;top:711.0px;height:16px;line-height:16px;color:#e6e6e6;font-size:12.5px;letter-spacing:-0.350px">2400.0</div>
<svg style="left:30px;top:735px;" width="10" height="10" viewBox="0 0 10 10"><circle cx="5" cy="5" r="4" fill="none" stroke="#6a6a6a" stroke-width="1.1"/></svg>
<div class="t" style="left:46px;top:733.0px;height:16px;line-height:16px;color:#e0e0e0;font-size:12.5px;letter-spacing:-0.250px">Divisions</div>
<div style="left:177px;top:732px;width:93px;height:16px;background:#272727;border-radius:3px"></div>
<div class="t" style="left:182px;top:733.0px;height:16px;line-height:16px;color:#6d6d6d;font-size:11px">#</div>
<div class="t" style="left:194px;top:733.0px;height:16px;line-height:16px;color:#e6e6e6;font-size:12.5px">10</div>
<div style="left:20px;top:705px;width:262px;height:28px;border:3px solid #b4e61e"></div>
<div style="left:494px;top:85px;width:30px;height:495px;background:#474747"></div>
<div style="left:503px;top:89px;width:2px;height:2px;background:#8a8a8a"></div>
<div style="left:507px;top:89px;width:2px;height:2px;background:#8a8a8a"></div>
<div style="left:511px;top:89px;width:2px;height:2px;background:#8a8a8a"></div>
<div style="left:495px;top:96px;width:28px;height:28px;background:#151515;border-radius:4px"></div>
<svg width="0" height="0" style="position:absolute"><defs><linearGradient id="wg" x1="0" y1="0" x2="0" y2="1"><stop offset="0" stop-color="#fafafa"/><stop offset="1" stop-color="#c4c4c4"/></linearGradient></defs></svg>
<svg style="left:503px;top:99px;" width="15" height="20" viewBox="0 0 15 20"><path d="M1 1L13.5 10.5L8.5 11.5L11 17L8.5 18.5L6 13L1.5 16.5Z" fill="none" stroke="#2ecc71" stroke-width="1.4" stroke-linejoin="round"/></svg>
<svg style="left:504px;top:130px;" width="14" height="20" viewBox="0 0 14 20"><path d="M0.5 0.5L13.5 12H6.5L0.5 19Z" fill="url(#wg)"/></svg>
<svg style="left:500px;top:162px;" width="18" height="18" viewBox="0 0 18 18"><path d="M1 1L11 4L15 12L12 15L4 11Z" fill="url(#wg)"/><circle cx="7.5" cy="7.5" r="1.3" fill="#474747"/><path d="M1 1L7 7" stroke="#474747" stroke-width="0.8"/><path d="M12.5 16.5L16.5 12.5" stroke="#ccc" stroke-width="2"/></svg>
<svg style="left:499px;top:190px;" width="19" height="20" viewBox="0 0 19 20"><path d="M1 19L2.5 14L13.5 3L17 6.5L6 17.5Z" fill="url(#wg)"/><circle cx="15.5" cy="3.5" r="2.5" fill="url(#wg)"/><path d="M0.5 19.5L2 17" stroke="#ddd" stroke-width="1"/></svg>
<svg style="left:498px;top:222px;" width="22" height="15" viewBox="0 0 22 15"><rect x="0.5" y="3" width="14" height="11.5" rx="1.5" fill="url(#wg)"/><rect x="4" y="0.5" width="7" height="1.5" fill="#ddd"/><circle cx="3.5" cy="6" r="1" fill="#333"/><path d="M15 9L21 5V13.5Z" fill="url(#wg)"/></svg>
<svg style="left:500px;top:251px;" width="18" height="18" viewBox="0 0 18 18"><path d="M1 17L17 1" stroke="#ddd" stroke-width="1.3"/></svg>
<svg style="left:502px;top:281px;" width="15" height="18" viewBox="0 0 15 18"><path d="M0.5 0.5H14.5V4H9.3V17.5H5.7V4H0.5Z" fill="url(#wg)"/></svg>
<svg style="left:500px;top:310px;" width="19" height="20" viewBox="0 0 19 20"><path d="M0.7 1L8.9 8L1.3 12.7Z" fill="#ddd"/><path d="M6 2.2L14.1 1.6L17 18H0.7" fill="none" stroke="#ccc" stroke-width="0.9"/><rect x="13.1" y="0.6" width="2.2" height="2.2" fill="#fff"/><rect x="16" y="17" width="2.2" height="2.2" fill="#fff"/><rect x="-0.3" y="17" width="2.2" height="2.2" fill="#fff"/></svg>
<svg style="left:502px;top:342px;" width="15" height="15" viewBox="0 0 15 15"><rect x="0" y="0" width="15" height="15" fill="url(#wg)"/></svg>
<svg style="left:500px;top:372px;" width="18" height="18" viewBox="0 0 18 18"><circle cx="9" cy="9" r="8.5" fill="url(#wg)"/></svg>
<svg style="left:500px;top:402px;" width="19" height="16" viewBox="0 0 19 16"><path d="M9.5 0.5L18.5 7L15 15.5H4L0.5 7Z" fill="url(#wg)"/></svg>
<svg style="left:500px;top:430px;" width="19" height="18" viewBox="0 0 19 18"><path d="M9.5 0.5L12 7H18.5L13.2 11L15.3 17.5L9.5 13.5L3.7 17.5L5.8 11L0.5 7H7Z" fill="url(#wg)"/></svg>
<svg style="left:502px;top:461px;" width="16" height="16" viewBox="0 0 16 16"><path d="M3 12A6.5 6.5 0 1 1 14 6" fill="none" stroke="#ddd" stroke-width="3.2"/></svg>
<svg style="left:501px;top:489px;" width="17" height="18" viewBox="0 0 17 18"><path d="M8.5 0.5Q9.5 8 16.5 9Q9.5 10 8.5 17.5Q7.5 10 0.5 9Q7.5 8 8.5 0.5Z" fill="url(#wg)"/></svg>
<svg style="left:500px;top:521px;" width="19" height="19" viewBox="0 0 19 19"><path d="M8 0.5h3l.6 2.6 2.3 1 2.3-1.4 2.1 2.1-1.4 2.3 1 2.3 2.6.6v3l-2.6.6-1 2.3 1.4 2.3-2.1 2.1-2.3-1.4-2.3 1-.6 2.6H8l-.6-2.6-2.3-1-2.3 1.4-2.1-2.1 1.4-2.3-1-2.3L.5 11V8l2.6-.6 1-2.3L2.7 2.8 4.8.7 7.1 2.1l2.3-1Z" transform="scale(0.95)" fill="url(#wg)"/><circle cx="9" cy="9" r="3" fill="#474747"/></svg>
<svg style="left:503px;top:566px;" width="14" height="10" viewBox="0 0 14 10"><path d="M1 0.5L6 5L1 9.5M7 0.5L12 5L7 9.5" fill="none" stroke="#999" stroke-width="1.2"/></svg>
<div style="left:530px;top:85px;width:1057px;height:22px;background:#1c1c1c"></div>
<div style="left:530px;top:85px;width:86px;height:22px;background:#454545;border-radius:4px 4px 0 0"></div>
<div class="t" style="left:535px;top:89.0px;height:16px;line-height:16px;color:#e6e6e6;font-size:12.5px;letter-spacing:-0.1px">Composition 1</div>
<div style="left:530px;top:107px;width:1057px;height:473px;background:#4a4a4a"></div>
<div style="left:550px;top:127px;width:1037px;height:431px;background:#000"></div>
<div style="left:704px;top:137px;width:728px;height:410px;background:#0a0a0a"></div>
<div class="t" style="left:535px;top:109.0px;height:16px;line-height:16px;color:#c4c4c4;font-size:11px">px</div>
<svg style="left:530px;top:107px;" width="1057" height="19" viewBox="0 0 1057 19"><rect x="25" y="12.5" width="1" height="7.5" fill="#a8a8a8"/><rect x="36" y="15.5" width="1" height="4.5" fill="#a8a8a8"/><rect x="48" y="15.5" width="1" height="4.5" fill="#a8a8a8"/><rect x="59" y="15.5" width="1" height="4.5" fill="#a8a8a8"/><rect x="71" y="15.5" width="1" height="4.5" fill="#a8a8a8"/><rect x="82" y="12.5" width="1" height="7.5" fill="#a8a8a8"/><rect x="93" y="15.5" width="1" height="4.5" fill="#a8a8a8"/><rect x="105" y="15.5" width="1" height="4.5" fill="#a8a8a8"/><rect x="116" y="15.5" width="1" height="4.5" fill="#a8a8a8"/><rect x="128" y="15.5" width="1" height="4.5" fill="#a8a8a8"/><rect x="139" y="12.5" width="1" height="7.5" fill="#a8a8a8"/><rect x="150" y="15.5" width="1" height="4.5" fill="#a8a8a8"/><rect x="162" y="15.5" width="1" height="4.5" fill="#a8a8a8"/><rect x="173" y="15.5" width="1" height="4.5" fill="#a8a8a8"/><rect x="185" y="15.5" width="1" height="4.5" fill="#a8a8a8"/><rect x="196" y="12.5" width="1" height="7.5" fill="#a8a8a8"/><rect x="207" y="15.5" width="1" height="4.5" fill="#a8a8a8"/><rect x="219" y="15.5" width="1" height="4.5" fill="#a8a8a8"/><rect x="230" y="15.5" width="1" height="4.5" fill="#a8a8a8"/><rect x="242" y="15.5" width="1" height="4.5" fill="#a8a8a8"/><rect x="253" y="12.5" width="1" height="7.5" fill="#a8a8a8"/><rect x="264" y="15.5" width="1" height="4.5" fill="#a8a8a8"/><rect x="276" y="15.5" width="1" height="4.5" fill="#a8a8a8"/><rect x="287" y="15.5" width="1" height="4.5" fill="#a8a8a8"/><rect x="299" y="15.5" width="1" height="4.5" fill="#a8a8a8"/><rect x="310" y="12.5" width="1" height="7.5" fill="#a8a8a8"/><rect x="321" y="15.5" width="1" height="4.5" fill="#a8a8a8"/><rect x="333" y="15.5" width="1" height="4.5" fill="#a8a8a8"/><rect x="344" y="15.5" width="1" height="4.5" fill="#a8a8a8"/><rect x="356" y="15.5" width="1" height="4.5" fill="#a8a8a8"/><rect x="367" y="12.5" width="1" height="7.5" fill="#a8a8a8"/><rect x="378" y="15.5" width="1" height="4.5" fill="#a8a8a8"/><rect x="390" y="15.5" width="1" height="4.5" fill="#a8a8a8"/><rect x="401" y="15.5" width="1" height="4.5" fill="#a8a8a8"/><rect x="413" y="15.5" width="1" height="4.5" fill="#a8a8a8"/><rect x="424" y="12.5" width="1" height="7.5" fill="#a8a8a8"/><rect x="435" y="15.5" width="1" height="4.5" fill="#a8a8a8"/><rect x="447" y="15.5" width="1" height="4.5" fill="#a8a8a8"/><rect x="458" y="15.5" width="1" height="4.5" fill="#a8a8a8"/><rect x="470" y="15.5" width="1" height="4.5" fill="#a8a8a8"/><rect x="481" y="12.5" width="1" height="7.5" fill="#a8a8a8"/><rect x="492" y="15.5" width="1" height="4.5" fill="#a8a8a8"/><rect x="504" y="15.5" width="1" height="4.5" fill="#a8a8a8"/><rect x="515" y="15.5" width="1" height="4.5" fill="#a8a8a8"/><rect x="527" y="15.5" width="1" height="4.5" fill="#a8a8a8"/><rect x="538" y="12.5" width="1" height="7.5" fill="#a8a8a8"/><rect x="549" y="15.5" width="1" height="4.5" fill="#a8a8a8"/><rect x="561" y="15.5" width="1" height="4.5" fill="#a8a8a8"/><rect x="572" y="15.5" width="1" height="4.5" fill="#a8a8a8"/><rect x="584" y="15.5" width="1" height="4.5" fill="#a8a8a8"/><rect x="595" y="12.5" width="1" height="7.5" fill="#a8a8a8"/><rect x="606" y="15.5" width="1" height="4.5" fill="#a8a8a8"/><rect x="618" y="15.5" width="1" height="4.5" fill="#a8a8a8"/><rect x="629" y="15.5" width="1" height="4.5" fill="#a8a8a8"/><rect x="641" y="15.5" width="1" height="4.5" fill="#a8a8a8"/><rect x="652" y="12.5" width="1" height="7.5" fill="#a8a8a8"/><rect x="663" y="15.5" width="1" height="4.5" fill="#a8a8a8"/><rect x="675" y="15.5" width="1" height="4.5" fill="#a8a8a8"/><rect x="686" y="15.5" width="1" height="4.5" fill="#a8a8a8"/><rect x="698" y="15.5" width="1" height="4.5" fill="#a8a8a8"/><rect x="709" y="12.5" width="1" height="7.5" fill="#a8a8a8"/><rect x="720" y="15.5" width="1" height="4.5" fill="#a8a8a8"/><rect x="732" y="15.5" width="1" height="4.5" fill="#a8a8a8"/><rect x="743" y="15.5" width="1" height="4.5" fill="#a8a8a8"/><rect x="755" y="15.5" width="1" height="4.5" fill="#a8a8a8"/><rect x="766" y="12.5" width="1" height="7.5" fill="#a8a8a8"/><rect x="777" y="15.5" width="1" height="4.5" fill="#a8a8a8"/><rect x="789" y="15.5" width="1" height="4.5" fill="#a8a8a8"/><rect x="800" y="15.5" width="1" height="4.5" fill="#a8a8a8"/><rect x="812" y="15.5" width="1" height="4.5" fill="#a8a8a8"/><rect x="823" y="12.5" width="1" height="7.5" fill="#a8a8a8"/><rect x="834" y="15.5" width="1" height="4.5" fill="#a8a8a8"/><rect x="846" y="15.5" width="1" height="4.5" fill="#a8a8a8"/><rect x="857" y="15.5" width="1" height="4.5" fill="#a8a8a8"/><rect x="869" y="15.5" width="1" height="4.5" fill="#a8a8a8"/><rect x="880" y="12.5" width="1" height="7.5" fill="#a8a8a8"/><rect x="891" y="15.5" width="1" height="4.5" fill="#a8a8a8"/><rect x="903" y="15.5" width="1" height="4.5" fill="#a8a8a8"/><rect x="914" y="15.5" width="1" height="4.5" fill="#a8a8a8"/><rect x="926" y="15.5" width="1" height="4.5" fill="#a8a8a8"/><rect x="937" y="12.5" width="1" height="7.5" fill="#a8a8a8"/><rect x="948" y="15.5" width="1" height="4.5" fill="#a8a8a8"/><rect x="960" y="15.5" width="1" height="4.5" fill="#a8a8a8"/><rect x="971" y="15.5" width="1" height="4.5" fill="#a8a8a8"/><rect x="983" y="15.5" width="1" height="4.5" fill="#a8a8a8"/><rect x="994" y="12.5" width="1" height="7.5" fill="#a8a8a8"/><rect x="1005" y="15.5" width="1" height="4.5" fill="#a8a8a8"/><rect x="1017" y="15.5" width="1" height="4.5" fill="#a8a8a8"/><rect x="1028" y="15.5" width="1" height="4.5" fill="#a8a8a8"/><rect x="1040" y="15.5" width="1" height="4.5" fill="#a8a8a8"/><rect x="1051" y="12.5" width="1" height="7.5" fill="#a8a8a8"/></svg>
<div style="left:530px;top:107px;width:1057px;height:20px;overflow:hidden"><div class="t" style="left:42.0px;top:1.5px;width:80px;text-align:center;height:12px;line-height:12px;color:#c8c8c8;font-size:10px;letter-spacing:0px">-1200</div><div class="t" style="left:99.0px;top:1.5px;width:80px;text-align:center;height:12px;line-height:12px;color:#c8c8c8;font-size:10px;letter-spacing:0px">-1050</div><div class="t" style="left:156.0px;top:1.5px;width:80px;text-align:center;height:12px;line-height:12px;color:#c8c8c8;font-size:10px;letter-spacing:0px">-900</div><div class="t" style="left:213.0px;top:1.5px;width:80px;text-align:center;height:12px;line-height:12px;color:#c8c8c8;font-size:10px;letter-spacing:0px">-750</div><div class="t" style="left:270.0px;top:1.5px;width:80px;text-align:center;height:12px;line-height:12px;color:#c8c8c8;font-size:10px;letter-spacing:0px">-600</div><div class="t" style="left:327.0px;top:1.5px;width:80px;text-align:center;height:12px;line-height:12px;color:#c8c8c8;font-size:10px;letter-spacing:0px">-450</div><div class="t" style="left:384.0px;top:1.5px;width:80px;text-align:center;height:12px;line-height:12px;color:#c8c8c8;font-size:10px;letter-spacing:0px">-300</div><div class="t" style="left:441.0px;top:1.5px;width:80px;text-align:center;height:12px;line-height:12px;color:#c8c8c8;font-size:10px;letter-spacing:0px">-150</div><div class="t" style="left:498.0px;top:1.5px;width:80px;text-align:center;height:12px;line-height:12px;color:#c8c8c8;font-size:10px;letter-spacing:0px">0</div><div class="t" style="left:555.0px;top:1.5px;width:80px;text-align:center;height:12px;line-height:12px;color:#c8c8c8;font-size:10px;letter-spacing:0px">150</div><div class="t" style="left:612.0px;top:1.5px;width:80px;text-align:center;height:12px;line-height:12px;color:#c8c8c8;font-size:10px;letter-spacing:0px">300</div><div class="t" style="left:669.0px;top:1.5px;width:80px;text-align:center;height:12px;line-height:12px;color:#c8c8c8;font-size:10px;letter-spacing:0px">450</div><div class="t" style="left:726.0px;top:1.5px;width:80px;text-align:center;height:12px;line-height:12px;color:#c8c8c8;font-size:10px;letter-spacing:0px">600</div><div class="t" style="left:783.0px;top:1.5px;width:80px;text-align:center;height:12px;line-height:12px;color:#c8c8c8;font-size:10px;letter-spacing:0px">750</div><div class="t" style="left:840.0px;top:1.5px;width:80px;text-align:center;height:12px;line-height:12px;color:#c8c8c8;font-size:10px;letter-spacing:0px">900</div><div class="t" style="left:897.0px;top:1.5px;width:80px;text-align:center;height:12px;line-height:12px;color:#c8c8c8;font-size:10px;letter-spacing:0px">1050</div><div class="t" style="left:954.0px;top:1.5px;width:80px;text-align:center;height:12px;line-height:12px;color:#c8c8c8;font-size:10px;letter-spacing:0px">1200</div><div class="t" style="left:1011.0px;top:1.5px;width:80px;text-align:center;height:12px;line-height:12px;color:#c8c8c8;font-size:10px;letter-spacing:0px">1350</div></div>
<svg style="left:530px;top:126px;" width="20" height="431" viewBox="0 0 20 431"><rect x="15" y="11" width="5" height="1" fill="#a8a8a8"/><rect x="15" y="22" width="5" height="1" fill="#a8a8a8"/><rect x="15" y="34" width="5" height="1" fill="#a8a8a8"/><rect x="13" y="45" width="7" height="1" fill="#a8a8a8"/><rect x="15" y="56" width="5" height="1" fill="#a8a8a8"/><rect x="15" y="68" width="5" height="1" fill="#a8a8a8"/><rect x="15" y="79" width="5" height="1" fill="#a8a8a8"/><rect x="15" y="91" width="5" height="1" fill="#a8a8a8"/><rect x="13" y="102" width="7" height="1" fill="#a8a8a8"/><rect x="15" y="113" width="5" height="1" fill="#a8a8a8"/><rect x="15" y="125" width="5" height="1" fill="#a8a8a8"/><rect x="15" y="136" width="5" height="1" fill="#a8a8a8"/><rect x="15" y="148" width="5" height="1" fill="#a8a8a8"/><rect x="13" y="159" width="7" height="1" fill="#a8a8a8"/><rect x="15" y="170" width="5" height="1" fill="#a8a8a8"/><rect x="15" y="182" width="5" height="1" fill="#a8a8a8"/><rect x="15" y="193" width="5" height="1" fill="#a8a8a8"/><rect x="15" y="205" width="5" height="1" fill="#a8a8a8"/><rect x="13" y="216" width="7" height="1" fill="#a8a8a8"/><rect x="15" y="227" width="5" height="1" fill="#a8a8a8"/><rect x="15" y="239" width="5" height="1" fill="#a8a8a8"/><rect x="15" y="250" width="5" height="1" fill="#a8a8a8"/><rect x="15" y="262" width="5" height="1" fill="#a8a8a8"/><rect x="13" y="273" width="7" height="1" fill="#a8a8a8"/><rect x="15" y="284" width="5" height="1" fill="#a8a8a8"/><rect x="15" y="296" width="5" height="1" fill="#a8a8a8"/><rect x="15" y="307" width="5" height="1" fill="#a8a8a8"/><rect x="15" y="319" width="5" height="1" fill="#a8a8a8"/><rect x="13" y="330" width="7" height="1" fill="#a8a8a8"/><rect x="15" y="341" width="5" height="1" fill="#a8a8a8"/><rect x="15" y="353" width="5" height="1" fill="#a8a8a8"/><rect x="15" y="364" width="5" height="1" fill="#a8a8a8"/><rect x="15" y="376" width="5" height="1" fill="#a8a8a8"/><rect x="13" y="387" width="7" height="1" fill="#a8a8a8"/><rect x="15" y="398" width="5" height="1" fill="#a8a8a8"/><rect x="15" y="410" width="5" height="1" fill="#a8a8a8"/><rect x="15" y="421" width="5" height="1" fill="#a8a8a8"/></svg>
<div class="t" style="left:497.5px;top:165.0px;width:80px;text-align:center;height:12px;line-height:12px;color:#c8c8c8;font-size:10px;letter-spacing:0px;transform:rotate(-90deg)">450</div>
<div class="t" style="left:497.5px;top:222.0px;width:80px;text-align:center;height:12px;line-height:12px;color:#c8c8c8;font-size:10px;letter-spacing:0px;transform:rotate(-90deg)">300</div>
<div class="t" style="left:497.5px;top:279.0px;width:80px;text-align:center;height:12px;line-height:12px;color:#c8c8c8;font-size:10px;letter-spacing:0px;transform:rotate(-90deg)">150</div>
<div class="t" style="left:497.5px;top:336.0px;width:80px;text-align:center;height:12px;line-height:12px;color:#c8c8c8;font-size:10px;letter-spacing:0px;transform:rotate(-90deg)">0</div>
<div class="t" style="left:497.5px;top:393.0px;width:80px;text-align:center;height:12px;line-height:12px;color:#c8c8c8;font-size:10px;letter-spacing:0px;transform:rotate(-90deg)">-150</div>
<div class="t" style="left:497.5px;top:450.0px;width:80px;text-align:center;height:12px;line-height:12px;color:#c8c8c8;font-size:10px;letter-spacing:0px;transform:rotate(-90deg)">-300</div>
<div class="t" style="left:497.5px;top:507.0px;width:80px;text-align:center;height:12px;line-height:12px;color:#c8c8c8;font-size:10px;letter-spacing:0px;transform:rotate(-90deg)">-450</div>
<div style="left:935px;top:209px;width:266px;height:266px;background:#6b6b6b"></div>
<div style="left:935px;top:209px;width:266px;height:266px;background:#00ffcc;border-radius:27px"></div>
<div style="left:612px;top:341px;width:912px;height:2px;background:#2fb462"></div>
<div style="left:609px;top:338px;width:8px;height:8px;background:#fff;border:1px solid #2fb462"></div>
<div style="left:1520px;top:338px;width:8px;height:8px;background:#fff;border:1px solid #2fb462"></div>
<svg style="left:1063px;top:337px;" width="10" height="10" viewBox="0 0 10 10"><circle cx="5" cy="5" r="4.2" fill="none" stroke="#1b3b33" stroke-width="1.1"/><circle cx="5" cy="5" r="1" fill="#1b3b33"/></svg>
<div style="left:612px;top:323px;width:9px;height:9px;background:#f7dc6f"></div>
<div class="t" style="left:624.5px;top:320.5px;height:16px;line-height:16px;color:#f2f2f2;font-size:12.5px;letter-spacing:-0.300px">HorizontalLine</div>
<div class="t" style="left:570px;top:460.0px;height:16px;line-height:16px;font-size:12.5px;letter-spacing:-0.455px"><span style="color:#f0f0f0">Hold S</span> <span style="color:#4a4a4a">Direct Layer Selection</span></div>
<div class="t" style="left:570px;top:474.0px;height:16px;line-height:16px;font-size:12.5px;letter-spacing:-0.660px"><span style="color:#f0f0f0">Space</span> <span style="color:#4a4a4a">Play/ Stop</span></div>
<div class="t" style="left:570px;top:488.0px;height:16px;line-height:16px;font-size:12.5px;letter-spacing:-0.693px"><span style="color:#f0f0f0">Space + click + drag</span> <span style="color:#4a4a4a">Pan</span></div>
<div class="t" style="left:570px;top:502.0px;height:16px;line-height:16px;font-size:12.5px;letter-spacing:-0.328px"><span style="color:#f0f0f0">Alt + click + drag</span> <span style="color:#4a4a4a">Move Pivot Point</span></div>
<div class="t" style="left:570px;top:516.0px;height:16px;line-height:16px;font-size:12.5px;letter-spacing:-0.565px"><span style="color:#f0f0f0">Shift</span> <span style="color:#4a4a4a">Enable Snapping</span></div>
<div class="t" style="left:998px;top:535.5px;height:16px;line-height:16px;color:#eeeeee;font-size:12.5px;letter-spacing:-0.117px">Viewport Quality: High</div>
<div style="left:530px;top:558px;width:1057px;height:22px;background:#474747"></div>
<div style="left:535px;top:561px;width:78px;height:16px;background:#292929;border-radius:3px"></div>
<div class="t" style="left:538px;top:562.0px;height:16px;line-height:16px;color:#e6e6e6;font-size:12.5px">38%</div>
<svg style="left:600px;top:566px;" width="8" height="5" viewBox="0 0 8 5"><path d="M0.5 0.5L4 4L7.5 0.5" fill="none" stroke="#ccc"/></svg>
<div style="left:866px;top:559px;width:100px;height:20px;background:#2a2a2a;border:1px solid #222;border-radius:4px"></div>
<div style="left:885.8px;top:560px;width:1px;height:18px;background:#1f1f1f"></div>
<div style="left:905.6px;top:560px;width:1px;height:18px;background:#1f1f1f"></div>
<div style="left:925.4px;top:560px;width:1px;height:18px;background:#1f1f1f"></div>
<div style="left:945.2px;top:560px;width:1px;height:18px;background:#1f1f1f"></div>
<svg style="left:870.0px;top:563px;" width="12" height="12" viewBox="0 0 12 12"><rect x="0" y="1" width="2" height="10" fill="#ccc"/><path d="M3 6L11 1V11Z" fill="#ccc"/></svg>
<svg style="left:889.8px;top:563px;" width="12" height="12" viewBox="0 0 12 12"><path d="M0 6L8 1V11Z" fill="#ccc"/><rect x="9.5" y="1" width="2" height="10" fill="#ccc"/></svg>
<svg style="left:909.6px;top:563px;" width="12" height="12" viewBox="0 0 12 12"><path d="M1 1L10 6L1 11Z" fill="#ccc"/></svg>
<svg style="left:929.4px;top:563px;" width="12" height="12" viewBox="0 0 12 12"><rect x="0" y="1" width="2" height="10" fill="#ccc"/><path d="M3.5 1L11.5 6L3.5 11Z" fill="#ccc"/></svg>
<svg style="left:949.2px;top:563px;" width="12" height="12" viewBox="0 0 12 12"><path d="M0 1L8 6L0 11Z" fill="#ccc"/><rect x="9.5" y="1" width="2" height="10" fill="#ccc"/></svg>
<div style="left:972px;top:559px;width:19px;height:20px;background:#2a2a2a;border:1px solid #222;border-radius:4px"></div>
<svg style="left:974px;top:563px;" width="15" height="12" viewBox="0 0 15 12"><path d="M8 3.5H1.5V10.5H14V7" fill="none" stroke="#ccc" stroke-width="1.3"/><path d="M9 0.5L14 3.5L9 6.5Z" fill="#ccc"/></svg>
<div style="left:1232px;top:560px;width:37px;height:17px;background:#2f2f2f;border-radius:3px"></div>
<svg style="left:1233px;top:564px;" width="14" height="9" viewBox="0 0 14 9"><path d="M3.5 0.5H13.5V8.5H3.5L0.5 4.5Z" fill="#ccc"/><circle cx="4.5" cy="4.5" r="1.2" fill="#333"/></svg>
<div class="t" style="left:1257px;top:562.0px;height:16px;line-height:16px;color:#ccc;font-size:12.5px">0</div>
<div style="left:1272px;top:559px;width:31px;height:20px;background:#2a2a2a;border:1px solid #222;border-radius:4px"></div>
<div style="left:1273px;top:560px;width:17px;height:18px;background:#303030;border-radius:3px 0 0 3px"></div>
<div style="left:1290px;top:560px;width:1px;height:18px;background:#222"></div>
<svg style="left:1294px;top:565px;" width="7" height="8" viewBox="0 0 7 8"><path d="M0.5 0.5L6 4L0.5 7.5Z" fill="none" stroke="#888"/></svg>
<svg style="left:1274px;top:561px;" width="15" height="16" viewBox="0 0 15 16"><path d="M1 5.5H4L8 2V14L4 10.5H1Z" fill="#2ecc71"/><path d="M10 5A4 4 0 0 1 10 11M12 3A6.5 6.5 0 0 1 12 13" fill="none" stroke="#2ecc71" stroke-width="1.2"/></svg>
<div style="left:1307px;top:559px;width:31px;height:20px;background:#2a2a2a;border:1px solid #222;border-radius:4px"></div>
<div style="left:1308px;top:560px;width:17px;height:18px;background:#363636;border-radius:3px 0 0 3px"></div>
<div style="left:1325px;top:560px;width:1px;height:18px;background:#222"></div>
<svg style="left:1329px;top:565px;" width="7" height="8" viewBox="0 0 7 8"><path d="M0.5 0.5L6 4L0.5 7.5Z" fill="none" stroke="#888"/></svg>
<svg style="left:1309px;top:561px;" width="15" height="16" viewBox="0 0 15 16"><path d="M3 10.5A5 5 0 0 1 12.5 5.5" fill="none" stroke="#ccc" stroke-width="2.4"/><path d="M2 10L4.5 13M12 4.5L14.5 7" stroke="#eee" stroke-width="1.6"/></svg>
<div style="left:1342px;top:559px;width:31px;height:20px;background:#2a2a2a;border:1px solid #222;border-radius:4px"></div>
<div style="left:1343px;top:560px;width:17px;height:18px;background:#363636;border-radius:3px 0 0 3px"></div>
<div style="left:1360px;top:560px;width:1px;height:18px;background:#222"></div>
<svg style="left:1364px;top:565px;" width="7" height="8" viewBox="0 0 7 8"><path d="M0.5 0.5L6 4L0.5 7.5Z" fill="none" stroke="#888"/></svg>
<svg style="left:1344px;top:561px;" width="15" height="16" viewBox="0 0 15 16"><path d="M5 1V15M10 1V15M1 5H14M1 11H14" stroke="#ddd" stroke-width="1.1"/></svg>
<div style="left:1377px;top:559px;width:20px;height:20px;background:#2a2a2a;border:1px solid #222;border-radius:4px"></div>
<svg style="left:1380px;top:563px;" width="15" height="12" viewBox="0 0 15 12"><rect x="0" y="0" width="3" height="3" fill="#2ecc71"/><rect x="0" y="5" width="3" height="7" fill="#2ecc71"/><rect x="4.5" y="0" width="10" height="7" fill="none" stroke="#2ecc71" stroke-width="1.8"/><rect x="4.5" y="9" width="10" height="3" fill="#2ecc71"/></svg>
<div style="left:1401px;top:559px;width:19px;height:20px;background:#2a2a2a;border:1px solid #222;border-radius:4px"></div>
<svg style="left:1403px;top:564px;" width="15" height="10" viewBox="0 0 15 10"><path d="M0.5 0.5L5 5L0.5 9.5ZM5 0.5L9.5 5L5 9.5M9.5 0.5L14 5L9.5 9.5" fill="#ccc" stroke="#ccc" stroke-width="1.2"/></svg>
<div style="left:1423px;top:559px;width:31px;height:20px;background:#2a2a2a;border:1px solid #222;border-radius:4px"></div>
<div style="left:1424px;top:560px;width:17px;height:18px;background:#363636;border-radius:3px 0 0 3px"></div>
<div style="left:1441px;top:560px;width:1px;height:18px;background:#222"></div>
<svg style="left:1445px;top:565px;" width="7" height="8" viewBox="0 0 7 8"><path d="M0.5 0.5L6 4L0.5 7.5Z" fill="none" stroke="#888"/></svg>
<svg style="left:1425px;top:561px;" width="15" height="16" viewBox="0 0 15 16"><rect x="1" y="2" width="13" height="10" fill="#444" stroke="#ddd" stroke-width="1.2"/><rect x="1" y="11" width="13" height="2" fill="#ddd"/></svg>
<div style="left:1458px;top:559px;width:31px;height:20px;background:#2a2a2a;border:1px solid #222;border-radius:4px"></div>
<div style="left:1459px;top:560px;width:17px;height:18px;background:#363636;border-radius:3px 0 0 3px"></div>
<div style="left:1476px;top:560px;width:1px;height:18px;background:#222"></div>
<svg style="left:1480px;top:565px;" width="7" height="8" viewBox="0 0 7 8"><path d="M0.5 0.5L6 4L0.5 7.5Z" fill="none" stroke="#888"/></svg>
<svg style="left:1460px;top:561px;" width="15" height="16" viewBox="0 0 15 16"><rect x="0.5" y="1.5" width="8" height="6" fill="none" stroke="#ddd" stroke-width="1.1"/><path d="M2.5 10H10.5V4M4.5 12H12.5V6M6.5 14H14.5V8" fill="none" stroke="#aaa" stroke-width="0.8"/></svg>
<div style="left:1493px;top:559px;width:31px;height:20px;background:#2a2a2a;border:1px solid #222;border-radius:4px"></div>
<div style="left:1494px;top:560px;width:17px;height:18px;background:#363636;border-radius:3px 0 0 3px"></div>
<div style="left:1511px;top:560px;width:1px;height:18px;background:#222"></div>
<svg style="left:1515px;top:565px;" width="7" height="8" viewBox="0 0 7 8"><path d="M0.5 0.5L6 4L0.5 7.5Z" fill="none" stroke="#888"/></svg>
<svg style="left:1495px;top:561px;" width="15" height="16" viewBox="0 0 15 16"><rect x="1" y="2" width="7.5" height="7" fill="#ddd"/><rect x="5" y="6" width="8.5" height="8" fill="#444" stroke="#ddd" stroke-width="1.2"/></svg>
<div style="left:1528px;top:559px;width:31px;height:20px;background:#2a2a2a;border:1px solid #222;border-radius:4px"></div>
<div style="left:1529px;top:560px;width:17px;height:18px;background:#303030;border-radius:3px 0 0 3px"></div>
<div style="left:1546px;top:560px;width:1px;height:18px;background:#222"></div>
<svg style="left:1550px;top:565px;" width="7" height="8" viewBox="0 0 7 8"><path d="M0.5 0.5L6 4L0.5 7.5Z" fill="none" stroke="#888"/></svg>
<svg style="left:1530px;top:561px;" width="15" height="16" viewBox="0 0 15 16"><rect x="1.0" y="1.5" width="3.6" height="3.6" fill="#2ecc71"/><rect x="8.2" y="1.5" width="3.6" height="3.6" fill="#2ecc71"/><rect x="4.6" y="5.1" width="3.6" height="3.6" fill="#2ecc71"/><rect x="11.8" y="5.1" width="3.6" height="3.6" fill="#2ecc71"/><rect x="1.0" y="8.7" width="3.6" height="3.6" fill="#2ecc71"/><rect x="8.2" y="8.7" width="3.6" height="3.6" fill="#2ecc71"/><rect x="4.6" y="12.3" width="3.6" height="3.6" fill="#2ecc71"/><rect x="11.8" y="12.3" width="3.6" height="3.6" fill="#2ecc71"/></svg>
<div style="left:1563px;top:559px;width:20px;height:20px;background:#2a2a2a;border:1px solid #222;border-radius:4px"></div>
<svg style="left:1565px;top:561px;" width="16" height="16" viewBox="0 0 16 16"><path d="M13.20 6.97 L15.25 7.14 L15.25 8.86 L13.20 9.03 L12.41 10.94 L13.73 12.52 L12.52 13.73 L10.94 12.41 L9.03 13.20 L8.86 15.25 L7.14 15.25 L6.97 13.20 L5.06 12.41 L3.48 13.73 L2.27 12.52 L3.59 10.94 L2.80 9.03 L0.75 8.86 L0.75 7.14 L2.80 6.97 L3.59 5.06 L2.27 3.48 L3.48 2.27 L5.06 3.59 L6.97 2.80 L7.14 0.75 L8.86 0.75 L9.03 2.80 L10.94 3.59 L12.52 2.27 L13.73 3.48 L12.41 5.06Z" fill="#ddd"/><circle cx="8" cy="8" r="5.6" fill="#ddd"/><circle cx="8" cy="8" r="2.8" fill="#2a2a2a"/></svg>
<div style="left:1593px;top:85px;width:321px;height:22px;background:#1c1c1c"></div>
<div style="left:1593px;top:85px;width:40px;height:22px;background:#454545;border-radius:4px 4px 0 0"></div>
<div class="t" style="left:1598px;top:89.0px;height:16px;line-height:16px;color:#e6e6e6;font-size:12.5px">Color</div>
<div style="left:1634px;top:85px;width:69px;height:22px;background:#262626;border-radius:4px 4px 0 0"></div>
<div class="t" style="left:1639px;top:89.0px;height:16px;line-height:16px;color:#e6e6e6;font-size:12.5px;letter-spacing:-0.2px">Add Layers</div>
<div style="left:1593px;top:107px;width:307px;height:377px;background:#444444"></div>
<div style="left:1900px;top:107px;width:14px;height:377px;background:#3a3a3a"></div>
<div style="left:1902px;top:108px;width:10px;height:302px;background:#555555;border-radius:5px"></div>
<div style="left:1646px;top:120px;width:200px;height:200px;background:conic-gradient(from 90deg,#f00 0deg,#f0f 60deg,#00f 120deg,#0ff 180deg,#0f0 240deg,#ff0 300deg,#f00 360deg);border-radius:50%"></div>
<div style="left:1671.5px;top:145.5px;width:149px;height:149px;background:#444444;border-radius:50%"></div>
<div style="left:1702px;top:176px;width:90px;height:90px;background:linear-gradient(to right,#000,rgba(0,0,0,0)),linear-gradient(to bottom,#fff,#f00)"></div>
<svg style="left:1826px;top:213px;" width="14" height="14" viewBox="0 0 14 14"><circle cx="7" cy="7" r="6" fill="none" stroke="#fff" stroke-width="1.3"/></svg>
<svg style="left:1738px;top:169px;" width="14" height="14" viewBox="0 0 14 14"><circle cx="7" cy="7" r="6" fill="none" stroke="#ddd" stroke-width="1.3"/></svg>
<div style="left:1600px;top:333px;width:22px;height:22px;background:#7a7a7a;border-radius:3px"></div>
<div class="t" style="left:1625px;top:337.0px;height:16px;line-height:16px;color:#e6e6e6;font-size:12.5px;letter-spacing:-0.567px">Gray</div>
<div style="left:1871px;top:333px;width:22px;height:21px;background:#2a2a2a;border:1px solid #222;border-radius:4px"></div>
<svg style="left:1875px;top:337px;" width="14" height="14" viewBox="0 0 14 14"><path d="M2 12L8 6" stroke="#bbb" stroke-width="2.2"/><path d="M2.6 11.4L7.6 6.4" stroke="#2a2a2a" stroke-width="0.9"/><path d="M7 4.5L10.5 1.5L12.5 3.5L9.5 7Z" fill="#ccc"/><path d="M6 4L10 8" stroke="#ccc" stroke-width="1.6"/></svg>
<div style="left:1600px;top:360px;width:50px;height:17px;background:#4a4a4a;border:1px solid #383838;border-radius:3px"></div>
<div class="t" style="left:1603px;top:361.5px;height:16px;line-height:16px;color:#e6e6e6;font-size:12.5px;letter-spacing:-0.625px">Hex</div>
<svg style="left:1637px;top:366px;" width="8" height="5" viewBox="0 0 8 5"><path d="M0.5 0.5L4 4L7.5 0.5" fill="none" stroke="#ccc"/></svg>
<div style="left:1653px;top:358px;width:240px;height:22px;background:#2a2a2a;border-radius:3px"></div>
<div class="t" style="left:1658px;top:362.0px;height:16px;line-height:16px;color:#5a5a5a;font-size:11px">#</div>
<div class="t" style="left:1670px;top:362.0px;height:16px;line-height:16px;color:#e6e6e6;font-size:12.5px;letter-spacing:-0.470px">7a7a7a</div>
<div style="left:1600px;top:390px;width:235px;height:4px;background:#e2e2e2;border-radius:2px"></div>
<div style="left:1829px;top:387px;width:10px;height:10px;background:#6cc4a4;border-radius:50%;border:2px solid #8fd6bc"></div>
<div style="left:1849px;top:384px;width:44px;height:16px;background:#2a2a2a;border-radius:3px"></div>
<div class="t" style="left:1853px;top:385.0px;height:16px;line-height:16px;color:#5a5a5a;font-size:12px">A</div>
<div class="t" style="left:1866px;top:385.0px;height:16px;line-height:16px;color:#e6e6e6;font-size:12.5px;letter-spacing:-0.225px">255</div>
<div style="left:1597px;top:406px;width:299px;height:22px;background:#1e1e1e"></div>
<div style="left:1599px;top:408px;width:148px;height:20px;background:#444444;border-radius:4px 4px 0 0"></div>
<div class="t" style="left:1648px;top:409.5px;height:16px;line-height:16px;color:#e6e6e6;font-size:12.5px;letter-spacing:-0.743px">Swatches</div>
<div style="left:1749px;top:408px;width:146px;height:20px;background:#2a2a2a;border-radius:4px 4px 0 0"></div>
<div class="t" style="left:1793px;top:409.5px;height:16px;line-height:16px;color:#cfcfcf;font-size:12.5px;letter-spacing:-0.287px">Generator</div>
<div style="left:1599px;top:431px;width:256px;height:18px;background:#585858;border-radius:4px"></div>
<div style="left:1600px;top:432px;width:61px;height:16px;background:#2a2a2a;border-radius:3px"></div>
<svg style="left:1606px;top:435px;" width="10" height="10" viewBox="0 0 10 10"><path d="M1 0.5V9.5M3.5 0.5V9.5" stroke="#2ecc71" stroke-width="1.6"/><path d="M5.5 0.5L8.5 9.5" stroke="#2ecc71" stroke-width="1.6"/></svg>
<div class="t" style="left:1621px;top:433.0px;height:16px;line-height:16px;color:#e6e6e6;font-size:12.5px;letter-spacing:-0.083px">Library</div>
<svg style="left:1671px;top:435px;" width="11" height="10" viewBox="0 0 11 10"><path d="M0.5 1h4l1 1.5h5v7H0.5Z" fill="#ccc"/><path d="M2.5 5h6M2.5 7h6" stroke="#585858"/></svg>
<div class="t" style="left:1686.3px;top:433.0px;height:16px;line-height:16px;color:#e6e6e6;font-size:12.5px;letter-spacing:-0.233px">Project</div>
<svg style="left:1739px;top:434px;" width="9" height="11" viewBox="0 0 9 11"><path d="M0.5 0.5H5.5L8.5 3.5V10.5H0.5Z" fill="none" stroke="#ccc"/></svg>
<div class="t" style="left:1752px;top:433.0px;height:16px;line-height:16px;color:#e6e6e6;font-size:12.5px;letter-spacing:-1.113px">Scene</div>
<svg style="left:1800px;top:434px;" width="11" height="11" viewBox="0 0 11 11"><path d="M0.5 1.5A1 1 0 0 1 1.5 0.5H9.5A1 1 0 0 1 10.5 1.5V6L6 10.5H1.5A1 1 0 0 1 0.5 9.5Z" fill="none" stroke="#ccc"/></svg>
<div class="t" style="left:1816px;top:433.0px;height:16px;line-height:16px;color:#e6e6e6;font-size:12.5px;letter-spacing:-0.770px">Labels</div>
<div style="left:1858px;top:431px;width:37px;height:18px;background:#585858;border-radius:4px"></div>
<div style="left:1859px;top:432px;width:17px;height:16px;background:#2a2a2a;border-radius:3px"></div>
<svg style="left:1862px;top:435px;" width="10" height="10" viewBox="0 0 10 10"><rect x="0.5" y="0.5" width="3" height="3" fill="#2ecc71"/><rect x="6" y="0.5" width="3" height="3" fill="#2ecc71"/><rect x="0.5" y="6" width="3" height="3" fill="#2ecc71"/><rect x="6" y="6" width="3" height="3" fill="#2ecc71"/></svg>
<svg style="left:1880px;top:435px;" width="12" height="10" viewBox="0 0 12 10"><path d="M0 1h11M0 4.7h11M0 8.5h11" stroke="#ddd" stroke-width="1"/></svg>
<div style="left:1599px;top:453px;width:274px;height:17px;background:#4a4a4a;border:1px solid #383838;border-radius:3px"></div>
<div class="t" style="left:1601px;top:454.5px;height:16px;line-height:16px;color:#e6e6e6;font-size:12.5px">new</div>
<svg style="left:1860px;top:459px;" width="8" height="5" viewBox="0 0 8 5"><path d="M0.5 0.5L4 4L7.5 0.5" fill="none" stroke="#ccc"/></svg>
<div style="left:1881px;top:460px;width:2px;height:2px;background:#ddd"></div>
<div style="left:1886px;top:460px;width:2px;height:2px;background:#ddd"></div>
<div style="left:1891px;top:460px;width:2px;height:2px;background:#ddd"></div>
<div style="left:1599px;top:470px;width:296px;height:14px;background:#262626"></div>
<div style="left:1600px;top:472px;width:18px;height:12px;background:#9b5cf5;border-radius:4px 4px 0 0"></div>
<div style="left:1622px;top:472px;width:18px;height:12px;background:#4da3ff;border-radius:4px 4px 0 0"></div>
<div style="left:1644px;top:472px;width:18px;height:12px;background:#ff7a4a;border-radius:4px 4px 0 0"></div>
<div style="left:1666px;top:472px;width:18px;height:12px;background:#52f2a6;border-radius:4px 4px 0 0"></div>
<div style="left:1688px;top:472px;width:18px;height:12px;background:#ff4f5e;border-radius:4px 4px 0 0"></div>
<div style="left:1710px;top:472px;width:18px;height:12px;background:#ff52c4;border-radius:4px 4px 0 0"></div>
<div style="left:1732px;top:472px;width:18px;height:12px;background:#ffd452;border-radius:4px 4px 0 0"></div>
<div style="left:1754px;top:472px;width:18px;height:12px;background:#4368dc;border-radius:4px 4px 0 0"></div>
<div style="left:1776px;top:472px;width:18px;height:12px;background:#56e0d4;border-radius:4px 4px 0 0"></div>
<div style="left:1798px;top:472px;width:18px;height:12px;background:#d67fd8;border-radius:4px 4px 0 0"></div>
<div style="left:1820px;top:472px;width:18px;height:12px;background:#b6ea8a;border-radius:4px 4px 0 0"></div>
<div style="left:1842px;top:472px;width:18px;height:12px;background:#6c5cff;border-radius:4px 4px 0 0"></div>
<div style="left:1593px;top:484px;width:321px;height:5px;background:#141414"></div>
<div style="left:1593px;top:489px;width:321px;height:22px;background:#1c1c1c"></div>
<div style="left:1593px;top:489px;width:38px;height:22px;background:#454545;border-radius:4px 4px 0 0"></div>
<div class="t" style="left:1598.5px;top:494.0px;height:16px;line-height:16px;color:#e6e6e6;font-size:12.5px;letter-spacing:-0.200px">Align</div>
<div style="left:1593px;top:511px;width:321px;height:69px;background:#444444"></div>
<div class="t" style="left:1601px;top:524.0px;height:16px;line-height:16px;color:#e6e6e6;font-size:12.5px;letter-spacing:-0.200px">Alignment</div>
<div class="t" style="left:1601px;top:552.0px;height:16px;line-height:16px;color:#e6e6e6;font-size:12.5px;letter-spacing:0.109px">Distribution</div>
<div style="left:1790px;top:522px;width:54px;height:18px;background:#2a2a2a;border:1px solid #1a1a1a;border-radius:4px"></div>
<div style="left:1808px;top:523px;width:1px;height:16px;background:#1a1a1a"></div>
<div style="left:1826px;top:523px;width:1px;height:16px;background:#1a1a1a"></div>
<svg style="left:1792px;top:524px;" width="14" height="14" viewBox="0 0 14 14"><path d="M2 1V13" stroke="#e6e6e6" stroke-width="1.4"/><path d="M4 4.5h5M4 9.5h8" stroke="#e6e6e6" stroke-width="2"/></svg>
<svg style="left:1810px;top:524px;" width="14" height="14" viewBox="0 0 14 14"><path d="M7 1V13" stroke="#e6e6e6" stroke-width="1.4"/><path d="M4 4.5h6M2.5 9.5h9" stroke="#e6e6e6" stroke-width="2"/></svg>
<svg style="left:1828px;top:524px;" width="14" height="14" viewBox="0 0 14 14"><path d="M12 1V13" stroke="#e6e6e6" stroke-width="1.4"/><path d="M5 4.5h5M2 9.5h8" stroke="#e6e6e6" stroke-width="2"/></svg>
<div style="left:1852px;top:522px;width:54px;height:18px;background:#2a2a2a;border:1px solid #1a1a1a;border-radius:4px"></div>
<div style="left:1870px;top:523px;width:1px;height:16px;background:#1a1a1a"></div>
<div style="left:1888px;top:523px;width:1px;height:16px;background:#1a1a1a"></div>
<svg style="left:1854px;top:524px;" width="14" height="14" viewBox="0 0 14 14"><path d="M1 2H13" stroke="#e6e6e6" stroke-width="1.4"/><path d="M4.5 4v6M9.5 4v9" stroke="#e6e6e6" stroke-width="2"/></svg>
<svg style="left:1872px;top:524px;" width="14" height="14" viewBox="0 0 14 14"><path d="M1 7H13" stroke="#e6e6e6" stroke-width="1.4"/><path d="M4.5 3v8M9.5 2v10" stroke="#e6e6e6" stroke-width="2"/></svg>
<svg style="left:1890px;top:524px;" width="14" height="14" viewBox="0 0 14 14"><path d="M1 12H13" stroke="#e6e6e6" stroke-width="1.4"/><path d="M4.5 5v6M9.5 2v9" stroke="#e6e6e6" stroke-width="2"/></svg>
<div style="left:1790px;top:550px;width:54px;height:18px;background:#2a2a2a;border:1px solid #1a1a1a;border-radius:4px"></div>
<div style="left:1808px;top:551px;width:1px;height:16px;background:#1a1a1a"></div>
<div style="left:1826px;top:551px;width:1px;height:16px;background:#1a1a1a"></div>
<svg style="left:1792px;top:552px;" width="14" height="14" viewBox="0 0 14 14"><path d="M2 1V13M12 1V13" stroke="#e6e6e6" stroke-width="1.4"/><path d="M6.5 3v8" stroke="#e6e6e6" stroke-width="2.2"/></svg>
<svg style="left:1810px;top:552px;" width="14" height="14" viewBox="0 0 14 14"><path d="M1 2H13M1 12H13" stroke="#e6e6e6" stroke-width="1.4"/><path d="M3 7h8" stroke="#e6e6e6" stroke-width="2.2"/></svg>
<svg style="left:1828px;top:552px;" width="14" height="14" viewBox="0 0 14 14"><path d="M1 12L4 9M6 7L8 5M10 3L13 1" stroke="#e6e6e6" stroke-width="1.4" stroke-dasharray="2 1"/><rect x="4" y="6" width="2" height="2" fill="#e6e6e6"/><rect x="8" y="3" width="2" height="2" fill="#e6e6e6"/></svg>
<div style="left:494px;top:586px;width:1420px;height:22px;background:#1c1c1c"></div>
<div style="left:494px;top:586px;width:89px;height:22px;background:#454545;border-radius:4px 4px 0 0"></div>
<div class="t" style="left:499px;top:590.0px;height:16px;line-height:16px;color:#e6e6e6;font-size:12.5px;letter-spacing:-0.495px">Scene Window</div>
<div style="left:584px;top:586px;width:100px;height:22px;background:#262626;border-radius:4px 4px 0 0"></div>
<div class="t" style="left:589px;top:590.0px;height:16px;line-height:16px;color:#e6e6e6;font-size:12.5px;letter-spacing:-0.312px">JavaScript Editor</div>
<div style="left:685px;top:586px;width:112px;height:22px;background:#262626;border-radius:4px 4px 0 0"></div>
<div class="t" style="left:690.5px;top:590.0px;height:16px;line-height:16px;color:#e6e6e6;font-size:12.5px;letter-spacing:-0.527px">Dependency Graph</div>
<div style="left:494px;top:608px;width:1420px;height:390px;background:#3a3a3a"></div>
<div style="left:499px;top:610px;width:1410px;height:20px;background:#474747;border-radius:5px 5px 0 0"></div>
<div class="t" style="left:1166px;top:612.0px;height:16px;line-height:16px;color:#e6e6e6;font-size:12.5px;letter-spacing:-0.325px">Composition 1</div>
<div style="left:494px;top:630px;width:699px;height:42px;background:#444444"></div>
<div style="left:496px;top:632px;width:489px;height:20px;background:#292929;border-radius:10px"></div>
<svg style="left:500px;top:636px;" width="13" height="13" viewBox="0 0 13 13"><circle cx="5" cy="5" r="4" fill="none" stroke="#ddd" stroke-width="1.2"/><path d="M8 8L11.5 11.5" stroke="#ddd" stroke-width="1.8"/></svg>
<div class="t" style="left:520px;top:635.0px;height:16px;line-height:16px;color:#8c8c8c;font-size:12.5px;letter-spacing:-0.535px">Enter a layer name</div>
<div class="btn" style="left:987px;top:632px;width:19px;height:19px;"></div>
<svg style="left:991px;top:636px;" width="11" height="11" viewBox="0 0 11 11"><path d="M5.5 0.5v10M0.5 5.5h10" stroke="#eee" stroke-width="1.7"/></svg>
<div class="btn" style="left:1031px;top:632px;width:19px;height:19px;"></div>
<div class="btn" style="left:1053px;top:632px;width:19px;height:19px;"></div>
<div class="btn" style="left:1075px;top:632px;width:19px;height:19px;"></div>
<svg style="left:1033px;top:634px;" width="15" height="15" viewBox="0 0 15 15"><circle cx="10" cy="5" r="4" fill="#ddd"/><path d="M3 13A6 6 0 0 1 7 5M1.5 11A6 6 0 0 1 5 4" fill="none" stroke="#777" stroke-width="1.3"/></svg>
<svg style="left:1055px;top:634px;" width="15" height="15" viewBox="0 0 15 15"><circle cx="3" cy="3" r="1" fill="#ddd"/><circle cx="9" cy="2.5" r="1" fill="#ddd"/><circle cx="3" cy="8" r="1" fill="#ddd"/><path d="M9 6v7M5.5 9.5h7" stroke="#ddd" stroke-width="1.5"/></svg>
<svg style="left:1077px;top:634px;" width="15" height="15" viewBox="0 0 15 15"><path d="M1 3h13M1 7.5h13M1 12h13" stroke="#ccc" stroke-width="0.9"/><circle cx="5" cy="3" r="1.6" fill="#2a2a2a" stroke="#ccc"/><circle cx="10" cy="7.5" r="1.6" fill="#2a2a2a" stroke="#ccc"/><circle cx="5" cy="12" r="1.6" fill="#2a2a2a" stroke="#ccc"/></svg>
<div style="left:1097px;top:632px;width:94px;height:20px;background:#292929;border-radius:3px"></div>
<div class="t" style="left:1103px;top:635.0px;height:16px;line-height:16px;color:#5a5a5a;font-size:12px">F</div>
<div class="t" style="left:1114px;top:635.0px;height:16px;line-height:16px;color:#e6e6e6;font-size:12.5px">0</div>
<svg style="left:500px;top:656px;" width="10" height="12" viewBox="0 0 10 12"><path d="M2.5 5V3.5a2.5 2.5 0 0 1 5 0V5" fill="none" stroke="#bbb" stroke-width="1.3"/><rect x="0.5" y="5" width="9" height="6.5" fill="#bbb"/><rect x="4" y="7.5" width="2" height="2" fill="#444"/></svg>
<svg style="left:515px;top:658px;" width="16" height="10" viewBox="0 0 16 10"><path d="M1 5C4 0.5 12 0.5 15 5C12 9.5 4 9.5 1 5Z" fill="none" stroke="#aaa" stroke-width="1"/><circle cx="8" cy="5" r="2" fill="#aaa"/></svg>
<svg style="left:536px;top:656px;" width="14" height="14" viewBox="0 0 14 14"><path d="M7 1L13 4V10.5L7 13.5L1 10.5V4Z M1 4L7 7L13 4M7 7V13.5" fill="none" stroke="#aaa" stroke-width="1"/></svg>
<svg style="left:555px;top:656px;" width="14" height="13" viewBox="0 0 14 13"><path d="M0.5 4.5H3.5L7 1V12L3.5 8.5H0.5Z" fill="#bbb"/><path d="M9 4A3 3 0 0 1 9 9M11 2A6 6 0 0 1 11 11" fill="none" stroke="#bbb" stroke-width="1.1"/></svg>
<svg style="left:575px;top:656px;" width="12" height="13" viewBox="0 0 12 13"><path d="M1 12L7 6" stroke="#aaa" stroke-width="2"/><path d="M1.6 11.4L6.6 6.4" stroke="#444" stroke-width="0.8"/><path d="M6 4L9.5 1L11.5 3L8.5 6.5Z" fill="#ccc"/><path d="M5 3.5L9 7.5" stroke="#ccc" stroke-width="1.5"/></svg>
<svg style="left:593px;top:659px;" width="14" height="9" viewBox="0 0 14 9"><path d="M3.5 0.5H13.5V8.5H3.5L0.5 4.5Z" fill="#ccc"/><circle cx="5" cy="4.5" r="1.6" fill="#444"/></svg>
<div class="t" style="left:649px;top:656.0px;height:16px;line-height:16px;color:#e6e6e6;font-size:12.5px">Name</div>
<div style="left:494px;top:672px;width:687px;height:132px;background:#383838"></div>
<div style="left:494px;top:804px;width:687px;height:160px;background:#2a2a2a"></div>
<div style="left:1181px;top:672px;width:10px;height:290px;background:#4e4e4e;border-radius:5px"></div>
<div style="left:1191px;top:672px;width:6px;height:292px;background:#2a2a2a"></div>
<div style="left:494px;top:962px;width:699px;height:14px;background:#2a2a2a"></div>
<div style="left:496px;top:964px;width:682px;height:10px;background:#4e4e4e;border-radius:5px"></div>
<div style="left:496px;top:673px;width:681px;height:20px;background:#57523f;border-radius:0 4px 4px 0"></div>
<div style="left:496px;top:674px;width:18px;height:18px;background:#262626;border-radius:2px"></div>
<div style="left:515px;top:674px;width:18px;height:18px;background:#262626;border-radius:2px"></div>
<div style="left:534px;top:674px;width:18px;height:18px;background:#262626;border-radius:2px"></div>
<svg style="left:516px;top:678px;" width="16" height="10" viewBox="0 0 16 10"><path d="M1 5C4 0.5 12 0.5 15 5C12 9.5 4 9.5 1 5Z" fill="none" stroke="#aaa" stroke-width="1"/><circle cx="8" cy="5" r="2" fill="#aaa"/></svg>
<div style="left:573px;top:675px;width:16px;height:16px;background:#ffe27a;border-radius:3px"></div>
<svg style="left:593px;top:679px;" width="14" height="9" viewBox="0 0 14 9"><path d="M3.5 0.5H13.5V8.5H3.5L0.5 4.5Z" fill="#ccc"/><circle cx="5" cy="4.5" r="1.6" fill="#333"/></svg>
<svg style="left:648px;top:681px;" width="15" height="4" viewBox="0 0 15 4"><rect x="0" y="1" width="2" height="2" fill="#f3dc6b"/><rect x="4" y="1.5" width="6" height="1" fill="#ddd"/><rect x="12" y="1" width="2" height="2" fill="#f3dc6b"/></svg>
<div class="t" style="left:667px;top:676.0px;height:16px;line-height:16px;color:#e6e6e6;font-size:12.5px;letter-spacing:-0.146px">HorizontalLine</div>
<svg style="left:1165px;top:678px;" width="10" height="10" viewBox="0 0 10 10"><circle cx="5" cy="5" r="4.2" fill="none" stroke="#6d6d6d" stroke-width="1.1"/></svg>
<div style="left:624px;top:671px;width:327px;height:25px;border:3px solid #b4e61e"></div>
<div style="left:496px;top:696px;width:18px;height:18px;background:#262626;border-radius:2px"></div>
<div style="left:515px;top:696px;width:18px;height:18px;background:#262626;border-radius:2px"></div>
<div style="left:534px;top:696px;width:18px;height:18px;background:#262626;border-radius:2px"></div>
<svg style="left:516px;top:700px;" width="16" height="10" viewBox="0 0 16 10"><path d="M1 5C4 0.5 12 0.5 15 5C12 9.5 4 9.5 1 5Z" fill="none" stroke="#aaa" stroke-width="1"/><circle cx="8" cy="5" r="2" fill="#aaa"/></svg>
<div style="left:573px;top:697px;width:16px;height:16px;background:#ffe27a;border-radius:3px"></div>
<svg style="left:593px;top:701px;" width="14" height="9" viewBox="0 0 14 9"><path d="M3.5 0.5H13.5V8.5H3.5L0.5 4.5Z" fill="#ccc"/><circle cx="5" cy="4.5" r="1.6" fill="#333"/></svg>
<div style="left:610px;top:697px;width:18px;height:17px;background:#2e2e2e;border-radius:2px"></div>
<svg style="left:615px;top:703px;" width="8" height="5" viewBox="0 0 8 5"><path d="M0.5 0.5L4 4L7.5 0.5" fill="none" stroke="#777"/></svg>
<div style="left:631px;top:702px;width:6px;height:6px;background:#ddd;border-radius:50%"></div>
<svg style="left:648px;top:698px;" width="13" height="13" viewBox="0 0 13 13"><path d="M3.5 0.7H9.5M3.5 12.3H9.5M0.7 3.5V9.5M12.3 3.5V9.5" stroke="#f3dc6b" stroke-width="1"/><rect x="0" y="0" width="2" height="2" fill="#eee"/><rect x="11" y="0" width="2" height="2" fill="#eee"/><rect x="0" y="11" width="2" height="2" fill="#eee"/><rect x="11" y="11" width="2" height="2" fill="#eee"/></svg>
<div class="t" style="left:667px;top:698.0px;height:16px;line-height:16px;color:#e6e6e6;font-size:12.5px;letter-spacing:-0.379px">CenterRectangle</div>
<svg style="left:1165px;top:700px;" width="10" height="10" viewBox="0 0 10 10"><circle cx="5" cy="5" r="4.2" fill="none" stroke="#6d6d6d" stroke-width="1.1"/></svg>
<svg style="left:633px;top:716px" width="12" height="58"><path d="M1 0V55M1 11H10M1 33H10M1 55H10" fill="none" stroke="#bbb" stroke-width="1" stroke-dasharray="1 1"/></svg>
<div class="t" style="left:647px;top:720.0px;height:16px;line-height:16px;color:#e6e6e6;font-size:12.5px;letter-spacing:-0.516px">Rectangle.Corner Radius</div>
<div style="left:1080px;top:719px;width:94px;height:16px;background:#2c2c2c;border-radius:3px"></div>
<div style="left:1080px;top:719px;width:84px;height:16px;background:#262626;border-radius:3px 0 0 3px"></div>
<div class="t" style="left:1084px;top:720.0px;height:16px;line-height:16px;color:#666;font-size:12px">#</div>
<div class="t" style="left:1098px;top:720.0px;height:16px;line-height:16px;color:#e6e6e6;font-size:12.5px">70.0</div>
<svg style="left:1152px;top:722px;" width="10" height="10" viewBox="0 0 10 10"><path d="M5 0.5L9.5 5L5 9.5L0.5 5Z" fill="#2ecc71"/></svg>
<svg style="left:1166px;top:723px;" width="8" height="8" viewBox="0 0 8 8"><path d="M0.5 0.5H4L7.5 4L4 7.5H0.5Z" fill="#888"/></svg>
<div class="t" style="left:647px;top:742.0px;height:16px;line-height:16px;color:#e6e6e6;font-size:12.5px;letter-spacing:-0.637px">Rectangle.Size.H</div>
<div style="left:1080px;top:741px;width:94px;height:16px;background:#2c2c2c;border-radius:3px"></div>
<div style="left:1080px;top:741px;width:84px;height:16px;background:#262626;border-radius:3px 0 0 3px"></div>
<div class="t" style="left:1084px;top:742.0px;height:16px;line-height:16px;color:#666;font-size:12px">H</div>
<div class="t" style="left:1098px;top:742.0px;height:16px;line-height:16px;color:#e6e6e6;font-size:12.5px">700.0</div>
<svg style="left:1152px;top:744px;" width="10" height="10" viewBox="0 0 10 10"><path d="M5 0.5L9.5 5L5 9.5L0.5 5Z" fill="#c8c8c8"/></svg>
<svg style="left:1166px;top:745px;" width="8" height="8" viewBox="0 0 8 8"><path d="M0.5 0.5H4L7.5 4L4 7.5H0.5Z" fill="#888"/></svg>
<div class="t" style="left:647px;top:764.0px;height:16px;line-height:16px;color:#e6e6e6;font-size:12.5px;letter-spacing:-0.623px">Rectangle.Size.W</div>
<div style="left:1080px;top:763px;width:94px;height:16px;background:#2c2c2c;border-radius:3px"></div>
<div style="left:1080px;top:763px;width:84px;height:16px;background:#262626;border-radius:3px 0 0 3px"></div>
<div class="t" style="left:1084px;top:764.0px;height:16px;line-height:16px;color:#666;font-size:12px">W</div>
<div class="t" style="left:1098px;top:764.0px;height:16px;line-height:16px;color:#e6e6e6;font-size:12.5px">700.0</div>
<svg style="left:1152px;top:766px;" width="10" height="10" viewBox="0 0 10 10"><path d="M5 0.5L9.5 5L5 9.5L0.5 5Z" fill="#c8c8c8"/></svg>
<svg style="left:1166px;top:767px;" width="8" height="8" viewBox="0 0 8 8"><path d="M0.5 0.5H4L7.5 4L4 7.5H0.5Z" fill="#888"/></svg>
<div style="left:496px;top:784px;width:18px;height:18px;background:#262626;border-radius:2px"></div>
<div style="left:515px;top:784px;width:18px;height:18px;background:#262626;border-radius:2px"></div>
<div style="left:534px;top:784px;width:18px;height:18px;background:#262626;border-radius:2px"></div>
<svg style="left:516px;top:788px;" width="16" height="10" viewBox="0 0 16 10"><path d="M1 5C4 0.5 12 0.5 15 5C12 9.5 4 9.5 1 5Z" fill="none" stroke="#aaa" stroke-width="1"/><circle cx="8" cy="5" r="2" fill="#aaa"/></svg>
<div style="left:573px;top:785px;width:16px;height:16px;background:#ffe27a;border-radius:3px"></div>
<svg style="left:593px;top:789px;" width="14" height="9" viewBox="0 0 14 9"><path d="M3.5 0.5H13.5V8.5H3.5L0.5 4.5Z" fill="#ccc"/><circle cx="5" cy="4.5" r="1.6" fill="#333"/></svg>
<svg style="left:648px;top:786px;" width="13" height="13" viewBox="0 0 13 13"><path d="M3.5 0.7H9.5M3.5 12.3H9.5M0.7 3.5V9.5M12.3 3.5V9.5" stroke="#f3dc6b" stroke-width="1"/><rect x="0" y="0" width="2" height="2" fill="#eee"/><rect x="11" y="0" width="2" height="2" fill="#eee"/><rect x="0" y="11" width="2" height="2" fill="#eee"/><rect x="11" y="11" width="2" height="2" fill="#eee"/></svg>
<div class="t" style="left:667px;top:786.0px;height:16px;line-height:16px;color:#e6e6e6;font-size:12.5px;letter-spacing:-0.585px">RectangleBG</div>
<svg style="left:1165px;top:788px;" width="10" height="10" viewBox="0 0 10 10"><circle cx="5" cy="5" r="4.2" fill="none" stroke="#6d6d6d" stroke-width="1.1"/></svg>
<div style="left:494px;top:976px;width:699px;height:22px;background:#454545"></div>
<div class="btn" style="left:498px;top:979px;width:18px;height:18px;"></div>
<svg style="left:500px;top:983px;" width="14" height="9" viewBox="0 0 14 9"><path d="M3.5 0.5H13.5V8.5H3.5L0.5 4.5Z" fill="#ccc"/><circle cx="5" cy="4.5" r="1.6" fill="#333"/></svg>
<div class="t" style="left:520px;top:980.0px;height:16px;line-height:16px;color:#e6e6e6;font-size:12.5px;letter-spacing:-0.444px">1 selected</div>
<div class="btn" style="left:984px;top:978px;width:20px;height:19px;"></div>
<svg style="left:988px;top:982px;" width="12" height="12" viewBox="0 0 12 12"><rect x="0.5" y="0.5" width="11" height="11" fill="none" stroke="#ccc"/><rect x="4" y="4" width="4" height="4" fill="#ccc"/></svg>
<div style="left:1007px;top:978px;width:183px;height:19px;background:#555555;border-radius:4px"></div>
<div style="left:1008px;top:979px;width:86px;height:17px;background:#2a2a2a;border-radius:3px"></div>
<svg style="left:1015px;top:981px;" width="13" height="13" viewBox="0 0 13 13"><path d="M1 2h11M3 6.5h9M1 11h11" stroke="#2ecc71" stroke-width="2"/></svg>
<div class="t" style="left:1030px;top:980.0px;height:16px;line-height:16px;color:#e6e6e6;font-size:12.5px;letter-spacing:-0.245px">Time Editor</div>
<svg style="left:1102px;top:980px;" width="14" height="14" viewBox="0 0 14 14"><path d="M1 1V13H13" fill="none" stroke="#ccc"/><path d="M2 11C5 11 7 4 12 2" fill="none" stroke="#ccc"/></svg>
<div class="t" style="left:1119px;top:980.0px;height:16px;line-height:16px;color:#e6e6e6;font-size:12.5px;letter-spacing:-0.350px">Graph Editor</div>
<div style="left:1193px;top:630px;width:721px;height:346px;background:#1e1e1e"></div>
<div style="left:1191px;top:630px;width:6px;height:346px;background:#262626"></div>
<div style="left:1195px;top:806px;width:1.5px;height:2px;background:#999"></div>
<div style="left:1195px;top:809px;width:1.5px;height:2px;background:#999"></div>
<div style="left:1195px;top:812px;width:1.5px;height:2px;background:#999"></div>
<div style="left:1195px;top:815px;width:1.5px;height:2px;background:#999"></div>
<div style="left:1195px;top:818px;width:1.5px;height:2px;background:#999"></div>
<div style="left:1195px;top:821px;width:1.5px;height:2px;background:#999"></div>
<div style="left:1197px;top:630px;width:717px;height:24px;background:#262626"></div>
<svg style="left:1197px;top:630px;" width="717" height="24" viewBox="0 0 717 24"><rect x="17" y="20" width="1" height="3.5" fill="#aaa"/><rect x="26" y="20" width="1" height="3.5" fill="#aaa"/><rect x="34" y="20" width="1" height="3.5" fill="#aaa"/><rect x="43" y="20" width="1" height="3.5" fill="#aaa"/><rect x="51" y="15" width="1" height="8" fill="#aaa"/><rect x="60" y="20" width="1" height="3.5" fill="#aaa"/><rect x="68" y="20" width="1" height="3.5" fill="#aaa"/><rect x="76" y="20" width="1" height="3.5" fill="#aaa"/><rect x="85" y="20" width="1" height="3.5" fill="#aaa"/><rect x="93" y="15" width="1" height="8" fill="#aaa"/><rect x="102" y="20" width="1" height="3.5" fill="#aaa"/><rect x="110" y="20" width="1" height="3.5" fill="#aaa"/><rect x="118" y="20" width="1" height="3.5" fill="#aaa"/><rect x="127" y="20" width="1" height="3.5" fill="#aaa"/><rect x="135" y="15" width="1" height="8" fill="#aaa"/><rect x="144" y="20" width="1" height="3.5" fill="#aaa"/><rect x="152" y="20" width="1" height="3.5" fill="#aaa"/><rect x="161" y="20" width="1" height="3.5" fill="#aaa"/><rect x="169" y="20" width="1" height="3.5" fill="#aaa"/><rect x="177" y="15" width="1" height="8" fill="#aaa"/><rect x="186" y="20" width="1" height="3.5" fill="#aaa"/><rect x="194" y="20" width="1" height="3.5" fill="#aaa"/><rect x="203" y="20" width="1" height="3.5" fill="#aaa"/><rect x="211" y="20" width="1" height="3.5" fill="#aaa"/><rect x="219" y="15" width="1" height="8" fill="#aaa"/><rect x="228" y="20" width="1" height="3.5" fill="#aaa"/><rect x="236" y="20" width="1" height="3.5" fill="#aaa"/><rect x="245" y="20" width="1" height="3.5" fill="#aaa"/><rect x="253" y="20" width="1" height="3.5" fill="#aaa"/><rect x="262" y="15" width="1" height="8" fill="#aaa"/><rect x="270" y="20" width="1" height="3.5" fill="#aaa"/><rect x="278" y="20" width="1" height="3.5" fill="#aaa"/><rect x="287" y="20" width="1" height="3.5" fill="#aaa"/><rect x="295" y="20" width="1" height="3.5" fill="#aaa"/><rect x="304" y="15" width="1" height="8" fill="#aaa"/><rect x="312" y="20" width="1" height="3.5" fill="#aaa"/><rect x="321" y="20" width="1" height="3.5" fill="#aaa"/><rect x="329" y="20" width="1" height="3.5" fill="#aaa"/><rect x="337" y="20" width="1" height="3.5" fill="#aaa"/><rect x="346" y="15" width="1" height="8" fill="#aaa"/><rect x="354" y="20" width="1" height="3.5" fill="#aaa"/><rect x="363" y="20" width="1" height="3.5" fill="#aaa"/><rect x="371" y="20" width="1" height="3.5" fill="#aaa"/><rect x="379" y="20" width="1" height="3.5" fill="#aaa"/><rect x="388" y="15" width="1" height="8" fill="#aaa"/><rect x="396" y="20" width="1" height="3.5" fill="#aaa"/><rect x="405" y="20" width="1" height="3.5" fill="#aaa"/><rect x="413" y="20" width="1" height="3.5" fill="#aaa"/><rect x="422" y="20" width="1" height="3.5" fill="#aaa"/><rect x="430" y="15" width="1" height="8" fill="#aaa"/><rect x="438" y="20" width="1" height="3.5" fill="#aaa"/><rect x="447" y="20" width="1" height="3.5" fill="#aaa"/><rect x="455" y="20" width="1" height="3.5" fill="#aaa"/><rect x="464" y="20" width="1" height="3.5" fill="#aaa"/><rect x="472" y="15" width="1" height="8" fill="#aaa"/><rect x="481" y="20" width="1" height="3.5" fill="#aaa"/><rect x="489" y="20" width="1" height="3.5" fill="#aaa"/><rect x="497" y="20" width="1" height="3.5" fill="#aaa"/><rect x="506" y="20" width="1" height="3.5" fill="#aaa"/><rect x="514" y="15" width="1" height="8" fill="#aaa"/><rect x="523" y="20" width="1" height="3.5" fill="#aaa"/><rect x="531" y="20" width="1" height="3.5" fill="#aaa"/><rect x="539" y="20" width="1" height="3.5" fill="#aaa"/><rect x="548" y="20" width="1" height="3.5" fill="#aaa"/><rect x="556" y="15" width="1" height="8" fill="#aaa"/><rect x="565" y="20" width="1" height="3.5" fill="#aaa"/><rect x="573" y="20" width="1" height="3.5" fill="#aaa"/><rect x="582" y="20" width="1" height="3.5" fill="#aaa"/><rect x="590" y="20" width="1" height="3.5" fill="#aaa"/><rect x="598" y="15" width="1" height="8" fill="#aaa"/><rect x="607" y="20" width="1" height="3.5" fill="#aaa"/><rect x="615" y="20" width="1" height="3.5" fill="#aaa"/><rect x="624" y="20" width="1" height="3.5" fill="#aaa"/><rect x="632" y="20" width="1" height="3.5" fill="#aaa"/><rect x="641" y="15" width="1" height="8" fill="#aaa"/><rect x="649" y="20" width="1" height="3.5" fill="#aaa"/><rect x="657" y="20" width="1" height="3.5" fill="#aaa"/><rect x="666" y="20" width="1" height="3.5" fill="#aaa"/><rect x="674" y="20" width="1" height="3.5" fill="#aaa"/><rect x="683" y="15" width="1" height="8" fill="#aaa"/><rect x="691" y="20" width="1" height="3.5" fill="#aaa"/><rect x="699" y="20" width="1" height="3.5" fill="#aaa"/><rect x="708" y="20" width="1" height="3.5" fill="#aaa"/></svg>
<div class="t" style="left:1176.0px;top:632px;width:60px;text-align:center;height:14px;line-height:14px;color:#dedede;font-size:12px;letter-spacing:-0.2px">0</div>
<div class="t" style="left:1218.1px;top:632px;width:60px;text-align:center;height:14px;line-height:14px;color:#dedede;font-size:12px;letter-spacing:-0.2px">15</div>
<div class="t" style="left:1260.2px;top:632px;width:60px;text-align:center;height:14px;line-height:14px;color:#dedede;font-size:12px;letter-spacing:-0.2px">30</div>
<div class="t" style="left:1302.3px;top:632px;width:60px;text-align:center;height:14px;line-height:14px;color:#dedede;font-size:12px;letter-spacing:-0.2px">45</div>
<div class="t" style="left:1344.4px;top:632px;width:60px;text-align:center;height:14px;line-height:14px;color:#dedede;font-size:12px;letter-spacing:-0.2px">60</div>
<div class="t" style="left:1386.5px;top:632px;width:60px;text-align:center;height:14px;line-height:14px;color:#dedede;font-size:12px;letter-spacing:-0.2px">75</div>
<div class="t" style="left:1428.6px;top:632px;width:60px;text-align:center;height:14px;line-height:14px;color:#dedede;font-size:12px;letter-spacing:-0.2px">90</div>
<div class="t" style="left:1470.7px;top:632px;width:60px;text-align:center;height:14px;line-height:14px;color:#dedede;font-size:12px;letter-spacing:-0.2px">105</div>
<div class="t" style="left:1512.8px;top:632px;width:60px;text-align:center;height:14px;line-height:14px;color:#dedede;font-size:12px;letter-spacing:-0.2px">120</div>
<div class="t" style="left:1554.9px;top:632px;width:60px;text-align:center;height:14px;line-height:14px;color:#dedede;font-size:12px;letter-spacing:-0.2px">135</div>
<div class="t" style="left:1597.0px;top:632px;width:60px;text-align:center;height:14px;line-height:14px;color:#dedede;font-size:12px;letter-spacing:-0.2px">150</div>
<div class="t" style="left:1639.1px;top:632px;width:60px;text-align:center;height:14px;line-height:14px;color:#dedede;font-size:12px;letter-spacing:-0.2px">165</div>
<div class="t" style="left:1681.2px;top:632px;width:60px;text-align:center;height:14px;line-height:14px;color:#dedede;font-size:12px;letter-spacing:-0.2px">180</div>
<div class="t" style="left:1723.3px;top:632px;width:60px;text-align:center;height:14px;line-height:14px;color:#dedede;font-size:12px;letter-spacing:-0.2px">195</div>
<div class="t" style="left:1765.4px;top:632px;width:60px;text-align:center;height:14px;line-height:14px;color:#dedede;font-size:12px;letter-spacing:-0.2px">210</div>
<div class="t" style="left:1807.5px;top:632px;width:60px;text-align:center;height:14px;line-height:14px;color:#dedede;font-size:12px;letter-spacing:-0.2px">225</div>
<div class="t" style="left:1849.6px;top:632px;width:60px;text-align:center;height:14px;line-height:14px;color:#dedede;font-size:12px;letter-spacing:-0.2px">240</div>
<div style="left:1208px;top:654px;width:699px;height:16px;background:#474747"></div>
<div style="left:1207px;top:654px;width:5px;height:16px;background:#1e1e1e"></div>
<div style="left:1907px;top:654px;width:5px;height:16px;background:#6ec4a7;border-radius:1px"></div>
<div style="left:1207px;top:672px;width:700px;height:290px;background:#262626"></div>
<div style="left:1207px;top:674px;width:700px;height:18px;background-color:#fff28c;background-image:radial-gradient(circle,#d2b44c 0.75px,transparent 1.05px),radial-gradient(circle,#d2b44c 0.75px,transparent 1.05px);background-size:3px 3px,3px 3px;background-position:0 0,1.5px 1.5px;border:1.3px solid #fff;border-radius:4px"></div>
<div class="t" style="left:1215px;top:675.0px;height:16px;line-height:16px;color:#222;font-size:12.5px;letter-spacing:-0.146px">HorizontalLine</div>
<div style="left:1207px;top:696px;width:701px;height:18px;background:#ffe680;border-radius:4px"></div>
<div class="t" style="left:1215px;top:697.0px;height:16px;line-height:16px;color:#222;font-size:12.5px;letter-spacing:-0.379px">CenterRectangle</div>
<div style="left:1207px;top:784px;width:701px;height:18px;background:#ffe680;border-radius:4px"></div>
<div class="t" style="left:1215px;top:785.0px;height:16px;line-height:16px;color:#222;font-size:12.5px;letter-spacing:-0.585px">RectangleBG</div>
<svg style="left:0;top:0" width="1920" height="1029"><path d="M1212 726H1300" stroke="#ffe680" stroke-width="2"/><path d="M1310 726H1342" stroke="#ffe680" stroke-width="2"/><path d="M1352 726H1426" stroke="#ffe680" stroke-width="2"/><path d="M1441 726H1453" stroke="#ffe680" stroke-width="2" stroke-dasharray="5 4.6"/><path d="M1464 726H1524" stroke="#ffe680" stroke-width="2"/><path d="M1539 726H1607" stroke="#ffe680" stroke-width="2" stroke-dasharray="5 4.6"/><path d="M1618 726H1899" stroke="#ffe680" stroke-width="2"/><path d="M1207 721.5L1211.5 726L1207 730.5L1202.5 726Z" fill="#c8c8c8"/><path d="M1305 721.5L1309.5 726L1305 730.5L1300.5 726Z" fill="#c8c8c8"/><path d="M1347 721.5L1351.5 726L1347 730.5L1342.5 726Z" fill="#c8c8c8"/><path d="M1431 721.5L1435.5 726L1431 730.5L1426.5 726Z" fill="#c8c8c8"/><path d="M1459 721.5L1463.5 726L1459 730.5L1454.5 726Z" fill="#c8c8c8"/><path d="M1529 721.5L1533.5 726L1529 730.5L1524.5 726Z" fill="#c8c8c8"/><path d="M1613 721.5L1617.5 726L1613 730.5L1608.5 726Z" fill="#c8c8c8"/><path d="M1904 721.5L1908.5 726L1904 730.5L1899.5 726Z" fill="#c8c8c8"/></svg>
<svg style="left:0;top:0" width="1920" height="1029"><path d="M1234 748H1286" stroke="#ffe680" stroke-width="2"/><path d="M1296 748H1359" stroke="#ffe680" stroke-width="2"/><path d="M1374 748H1402.5" stroke="#ffe680" stroke-width="2" stroke-dasharray="5 4.6"/><path d="M1413.5 748H1468" stroke="#ffe680" stroke-width="2"/><path d="M1478 748H1538" stroke="#ffe680" stroke-width="2"/><path d="M1548 748H1622" stroke="#ffe680" stroke-width="2"/><path d="M1229 743.5L1233.5 748L1229 752.5L1224.5 748Z" fill="#c8c8c8"/><path d="M1291 743.5L1295.5 748L1291 752.5L1286.5 748Z" fill="#c8c8c8"/><path d="M1364 743.5L1368.5 748L1364 752.5L1359.5 748Z" fill="#c8c8c8"/><path d="M1408.5 743.5L1413.0 748L1408.5 752.5L1404.0 748Z" fill="#c8c8c8"/><path d="M1473 743.5L1477.5 748L1473 752.5L1468.5 748Z" fill="#c8c8c8"/><path d="M1543 743.5L1547.5 748L1543 752.5L1538.5 748Z" fill="#c8c8c8"/><path d="M1627 743.5L1631.5 748L1627 752.5L1622.5 748Z" fill="#c8c8c8"/></svg>
<svg style="left:0;top:0" width="1920" height="1029"><path d="M1268 770H1314" stroke="#ffe680" stroke-width="2"/><path d="M1324 770H1342" stroke="#ffe680" stroke-width="2"/><path d="M1357 770H1402.5" stroke="#ffe680" stroke-width="2" stroke-dasharray="5 4.6"/><path d="M1413.5 770H1510" stroke="#ffe680" stroke-width="2"/><path d="M1520 770H1622" stroke="#ffe680" stroke-width="2"/><path d="M1263 765.5L1267.5 770L1263 774.5L1258.5 770Z" fill="#c8c8c8"/><path d="M1319 765.5L1323.5 770L1319 774.5L1314.5 770Z" fill="#c8c8c8"/><path d="M1347 765.5L1351.5 770L1347 774.5L1342.5 770Z" fill="#c8c8c8"/><path d="M1408.5 765.5L1413.0 770L1408.5 774.5L1404.0 770Z" fill="#c8c8c8"/><path d="M1515 765.5L1519.5 770L1515 774.5L1510.5 770Z" fill="#c8c8c8"/><path d="M1627 765.5L1631.5 770L1627 774.5L1622.5 770Z" fill="#c8c8c8"/></svg>
<svg style="left:1200px;top:644px;" width="15" height="9" viewBox="0 0 15 9"><path d="M0.5 0.5H14.5L7.5 8.5Z" fill="#6ec4a7"/></svg>
<div style="left:1202px;top:652px;width:6px;height:18px;background:#6ec4a7"></div>
<div style="left:1206px;top:670px;width:1.5px;height:292px;background:#58a08a"></div>
<div style="left:1197px;top:962px;width:717px;height:14px;background:#1e1e1e"></div>
<div style="left:1201px;top:964px;width:711px;height:10px;background:#4e4e4e;border-radius:5px"></div>
<div style="left:1199px;top:976px;width:715px;height:22px;background:#454545"></div>
<div class="btn" style="left:1203px;top:979px;width:18px;height:18px;"></div>
<svg style="left:1205px;top:981px;" width="14" height="13" viewBox="0 0 14 13"><path d="M1 1.5h12M1 5.5h2M5 5.5h8M1 9.5h5M8 9.5h2" stroke="#ddd" stroke-width="1.6"/><path d="M11 13L14 10V13Z" fill="#5fd3a5"/></svg>
<div style="left:1224px;top:979px;width:149px;height:18px;background:#2a2a2a;border-radius:3px"></div>
<div class="t" style="left:1226.5px;top:979.5px;height:16px;line-height:16px;color:#e6e6e6;font-size:12.5px;letter-spacing:-0.348px">Default Keyframe Layer</div>
<div style="left:1380px;top:979px;width:70px;height:18px;background:#2a2a2a;border-radius:3px"></div>
<div class="t" style="left:1386px;top:979.5px;height:16px;line-height:16px;color:#555;font-size:12px">F</div>
<div class="t" style="left:1398px;top:979.5px;height:16px;line-height:16px;color:#ccc;font-size:12.5px">-</div>
<div class="t" style="left:1456px;top:979.5px;height:16px;line-height:16px;color:#e6e6e6;font-size:12.5px;letter-spacing:-0.050px">Align:</div>
<div style="left:1493px;top:978px;width:53px;height:19px;background:#2a2a2a;border:1px solid #1a1a1a;border-radius:4px"></div>
<div style="left:1510px;top:979px;width:1px;height:17px;background:#1a1a1a"></div>
<div style="left:1528px;top:979px;width:1px;height:17px;background:#1a1a1a"></div>
<svg style="left:1496px;top:981px;" width="13" height="13" viewBox="0 0 13 13"><path d="M1.5 1V12" stroke="#ddd" stroke-width="1.2"/><path d="M4 4h4M4 9h7" stroke="#ddd" stroke-width="1.8"/></svg>
<svg style="left:1513px;top:981px;" width="13" height="13" viewBox="0 0 13 13"><path d="M6.5 1V12" stroke="#ddd" stroke-width="1.2"/><path d="M3 4h7M2 9h9" stroke="#ddd" stroke-width="1.8"/></svg>
<svg style="left:1531px;top:981px;" width="13" height="13" viewBox="0 0 13 13"><path d="M11.5 1V12" stroke="#ddd" stroke-width="1.2"/><path d="M5 4h4M2 9h7" stroke="#ddd" stroke-width="1.8"/></svg>
<div class="btn" style="left:1549px;top:978px;width:19px;height:19px;"></div>
<svg style="left:1552px;top:981px;" width="13" height="13" viewBox="0 0 13 13"><rect x="1.5" y="1.5" width="10" height="10" fill="none" stroke="#ddd" stroke-dasharray="2 1.5"/><rect x="4.5" y="4.5" width="4" height="4" fill="#ddd"/></svg>
<div style="left:1570px;top:978px;width:32px;height:19px;background:#2a2a2a;border:1px solid #1a1a1a;border-radius:4px"></div>
<div style="left:1589px;top:979px;width:1px;height:17px;background:#1a1a1a"></div>
<svg style="left:1573px;top:981px;" width="14" height="14" viewBox="0 0 14 14"><path d="M3 10A4.5 4.5 0 0 1 11.5 5" fill="none" stroke="#ddd" stroke-width="2.2"/></svg>
<svg style="left:1593px;top:983px;" width="7" height="8" viewBox="0 0 7 8"><path d="M0.5 0.5L6 4L0.5 7.5Z" fill="none" stroke="#888"/></svg>
<div style="left:1605px;top:978px;width:32px;height:19px;background:#2a2a2a;border:1px solid #1a1a1a;border-radius:4px"></div>
<div style="left:1624px;top:979px;width:1px;height:17px;background:#1a1a1a"></div>
<svg style="left:1608px;top:981px;" width="14" height="14" viewBox="0 0 14 14"><path d="M7 1V13M1 7H5M9 7H13" stroke="#ddd" stroke-width="1.3"/><path d="M4.5 4V10M9.5 4V10" stroke="#ddd"/></svg>
<svg style="left:1628px;top:983px;" width="7" height="8" viewBox="0 0 7 8"><path d="M0.5 0.5L6 4L0.5 7.5Z" fill="none" stroke="#888"/></svg>
<svg style="left:1743px;top:980px;" width="15" height="15" viewBox="0 0 15 15"><circle cx="6" cy="6" r="5" fill="none" stroke="#ccc" stroke-width="1.1"/><path d="M3.5 6h5" stroke="#ccc"/><path d="M9.5 9.5L13.5 13.5" stroke="#ccc" stroke-width="1.6"/></svg>
<div style="left:1771px;top:985px;width:110px;height:4px;background:#383838;border-radius:2px"></div>
<div style="left:1762px;top:982px;width:10px;height:10px;background:#6cc4a4;border-radius:50%;border:2px solid #8fd6bc"></div>
<svg style="left:1887px;top:980px;" width="15" height="15" viewBox="0 0 15 15"><circle cx="6" cy="6" r="5" fill="none" stroke="#ccc" stroke-width="1.1"/><path d="M3.5 6h5M6 3.5v5" stroke="#ccc"/><path d="M9.5 9.5L13.5 13.5" stroke="#ccc" stroke-width="1.6"/></svg>
<div style="left:494px;top:1004px;width:1420px;height:22px;background:#3c3c3c"></div>
<div style="left:498px;top:1010px;width:2px;height:2px;background:#888"></div>
<div style="left:498px;top:1014px;width:2px;height:2px;background:#888"></div>
<div style="left:498px;top:1018px;width:2px;height:2px;background:#888"></div>
<div class="btn" style="left:506px;top:1006px;width:18px;height:18px;"></div>
<svg style="left:508px;top:1008px;" width="14" height="13" viewBox="0 0 14 13"><path d="M1 1H13V9H6L3 12V9H1Z" fill="none" stroke="#ddd" stroke-width="1.2"/><path d="M3.5 3.5h7M3.5 6h7" stroke="#ddd"/></svg>
<div style="left:528px;top:1008px;width:18px;height:14px;background:#d9c36d;border-radius:2px"></div>
<div class="t" style="left:533px;top:1008.0px;height:16px;line-height:16px;color:#333;font-size:12px">0</div>
<div style="left:554px;top:1012px;width:6px;height:6px;background:#d9c36d;border-radius:50%"></div>
<div class="t" style="left:565px;top:1008.0px;height:16px;line-height:16px;color:#e6e6e6;font-size:12.5px;letter-spacing:-0.537px">You are working in an unsaved scene.</div>
<div style="left:1477px;top:1006px;width:80px;height:18px;background:#d6bd6c;border-radius:2px"></div>
<div class="t" style="left:1483px;top:1008.0px;height:16px;line-height:16px;color:#2a2a2a;font-size:12.5px;letter-spacing:-0.850px">Feedback</div>
<div style="left:1560px;top:1006px;width:109px;height:18px;background:#3dc45e;border-radius:2px"></div>
<div class="t" style="left:1565.5px;top:1008.0px;height:16px;line-height:16px;color:#1d1d1d;font-size:12.5px;letter-spacing:-0.442px">Upgrade to Pro</div>
<div style="left:1672px;top:1006px;width:130px;height:18px;background:#c79ef2;border-radius:2px"></div>
<div class="t" style="left:1676.7px;top:1008.0px;height:16px;line-height:16px;color:#1d1d1d;font-size:12.5px;letter-spacing:-0.382px">New Beta Available</div>
<div style="left:1805px;top:1006px;width:106px;height:18px;background:#2fa6ee;border-radius:2px"></div>
<div class="t" style="left:1810.3px;top:1008.0px;height:16px;line-height:16px;color:#1d1d1d;font-size:12.5px;letter-spacing:-0.507px">Tips and Tricks</div>
<svg style="left:1538px;top:1008px;" width="14" height="14" viewBox="0 0 14 14"><path d="M2 1H8L11 4V13H2Z" fill="#f4f4f4"/><path d="M4 5h4M4 7.5h4" stroke="#bbb" stroke-width="0.8"/><path d="M6 12L12 6L13.5 7.5L7.5 13.5H6Z" fill="#f08a4a"/></svg>
<svg style="left:1648px;top:1008px;" width="14" height="14" viewBox="0 0 14 14"><path d="M1 13L1.5 6L3.5 4L5 7L6.5 13Z" fill="#f5c518"/><path d="M13 13L12.5 6L10.5 4L9 7L7.5 13Z" fill="#f5c518"/><path d="M4 2.5L5 1M7 2L7 0.5M10 2.5L9 1" stroke="#f5c518" stroke-width="0.8"/></svg>
<svg style="left:1782px;top:1008px;" width="14" height="14" viewBox="0 0 14 14"><circle cx="7" cy="8" r="5.5" fill="#f6c03a"/><path d="M7 3L10 0.5L12 5Z" fill="#5b7bd8"/><circle cx="5" cy="8" r="0.8" fill="#333"/><circle cx="9" cy="8" r="0.8" fill="#333"/><path d="M1 11L3 9M11 12L13 10" stroke="#e8559a" stroke-width="1.2"/></svg>
<svg style="left:1891px;top:1008px;" width="14" height="14" viewBox="0 0 14 14"><path d="M3 11L4 7L10 1.5L12.5 1.5L12.5 4L7 10Z" fill="#eee"/><path d="M10 1.5L12.5 1.5L12.5 4Z" fill="#e0475a"/><path d="M4 7L1.5 7.5L3 5.5Z M7 10L6.5 12.5L8.5 11Z" fill="#e0475a"/><path d="M3 11L1 13" stroke="#f29a3a" stroke-width="1.5"/><circle cx="9" cy="5" r="1.2" fill="#5aa0e8"/></svg></body></html>
